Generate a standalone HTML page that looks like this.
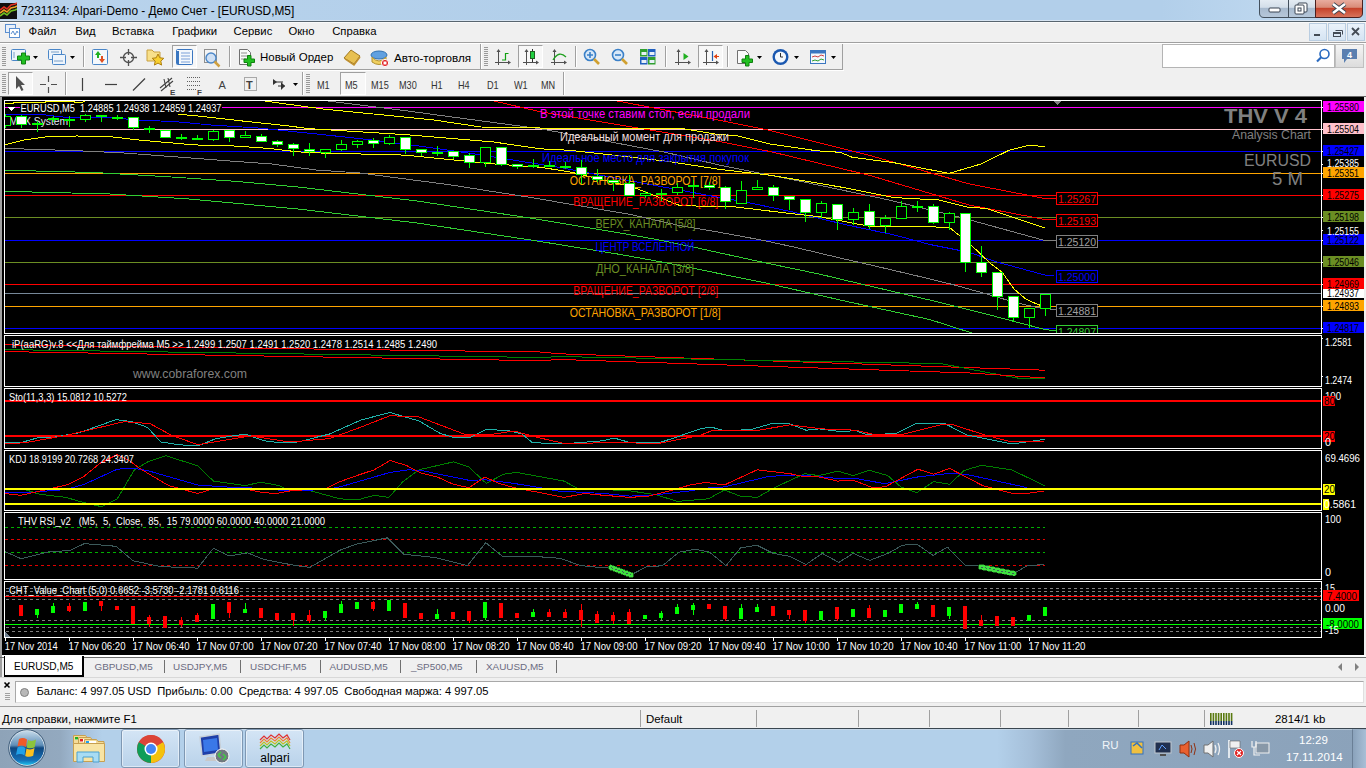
<!DOCTYPE html>
<html><head><meta charset="utf-8"><style>
*{margin:0;padding:0;box-sizing:border-box}
html,body{width:1366px;height:768px;overflow:hidden;background:#f0f0f0;font-family:"Liberation Sans",sans-serif}
.a{position:absolute}
.t{position:absolute;white-space:pre;line-height:1}
svg{position:absolute;left:0;top:0;overflow:hidden}
svg text{font-family:"Liberation Sans",sans-serif;white-space:pre}
</style></head><body>

<div class="a" style="left:0;top:0;width:1366px;height:21px;background:linear-gradient(90deg,#b9d3ec 0%,#b2cfea 40%,#b2cfea 85%,#bcd6ee 92%,#b5d1eb 100%)"></div>
<div class="a" style="left:0;top:20px;width:1366px;height:1px;background:#d6e4f2"></div>
<div class="a" style="left:0;top:21px;width:1366px;height:1px;background:#58656f"></div>
<div class="a" style="left:0;top:22px;width:1366px;height:1px;background:#fafafa"></div>
<svg style="left:0;top:2px" width="17" height="18" viewBox="0 0 17 18">
<rect x="0" y="1" width="17" height="16" fill="#101010"/>
<polyline points="0,8 4,5 7,7 11,3 15,2 17,1" fill="none" stroke="#e03020" stroke-width="1.6"/>
<polyline points="0,11 4,8 7,10 11,6 15,5 17,4" fill="none" stroke="#f0a020" stroke-width="1.6"/>
<polyline points="0,14 4,11 7,13 11,9 15,8 17,7" fill="none" stroke="#70c020" stroke-width="1.6"/>
</svg>
<div class="t" style="left:21px;top:5.5px;font-size:11.85px;color:#000">7231134: Alpari-Demo - Демо Счет - [EURUSD,M5]</div>
<svg style="left:1259px;top:0" width="105" height="19" viewBox="0 0 105 19">
<defs>
<linearGradient id="gb" x1="0" y1="0" x2="0" y2="1"><stop offset="0" stop-color="#e6edf4"/><stop offset="0.45" stop-color="#d3dee9"/><stop offset="0.5" stop-color="#a8bace"/><stop offset="1" stop-color="#b7c8da"/></linearGradient>
<linearGradient id="gr" x1="0" y1="0" x2="0" y2="1"><stop offset="0" stop-color="#eab0a4"/><stop offset="0.45" stop-color="#d98b78"/><stop offset="0.5" stop-color="#c5412a"/><stop offset="1" stop-color="#d8765e"/></linearGradient>
</defs>
<path d="M0.5,-1 V13 Q0.5,17.5 5,17.5 H29.5 V-1" fill="url(#gb)" stroke="#43505d"/>
<rect x="29.5" y="-1" width="27" height="18.5" fill="url(#gb)" stroke="#43505d"/>
<path d="M56.5,-1 V17.5 H99 Q103.5,17.5 103.5,13 V-1" fill="url(#gr)" stroke="#4a2020"/>
<rect x="10" y="8" width="11" height="4" rx="1" fill="#fff" stroke="#3a4452"/>
<rect x="39" y="3" width="9" height="9" rx="1" fill="#fff" stroke="#3a4452"/>
<rect x="36" y="5" width="9" height="9" rx="1" fill="#fff" stroke="#3a4452"/>
<rect x="39" y="8" width="3" height="3" fill="none" stroke="#3a4452"/>
<path d="M74,4 L86,13 M86,4 L74,13" stroke="#3a4452" stroke-width="4.4"/>
<path d="M74,4 L86,13 M86,4 L74,13" stroke="#fff" stroke-width="2.6"/>
</svg>
<div class="a" style="left:0;top:42px;width:1366px;height:1px;background:#a0a0a0"></div>
<div class="a" style="left:0;top:43px;width:1366px;height:1px;background:#ffffff"></div>
<svg style="left:4px;top:23px" width="17" height="16" viewBox="0 0 17 16">
<rect x="1.5" y="1.5" width="10" height="8" fill="#e8f0fa" stroke="#5b8fd0"/>
<rect x="5.5" y="5.5" width="10" height="9" fill="#fff" stroke="#5b8fd0"/>
<polyline points="7,11 9,8 11,12 13,8 14,10" fill="none" stroke="#5b8fd0"/>
</svg>
<div class="t" style="left:28.6px;top:26.3px;font-size:11.3px;color:#000">Файл</div>
<div class="t" style="left:75.2px;top:26.3px;font-size:11.3px;color:#000">Вид</div>
<div class="t" style="left:112px;top:26.3px;font-size:11.3px;color:#000">Вставка</div>
<div class="t" style="left:172.2px;top:26.3px;font-size:11.3px;color:#000">Графики</div>
<div class="t" style="left:233.6px;top:26.3px;font-size:11.3px;color:#000">Сервис</div>
<div class="t" style="left:288.4px;top:26.3px;font-size:11.3px;color:#000">Окно</div>
<div class="t" style="left:332.2px;top:26.3px;font-size:11.3px;color:#000">Справка</div>
<div class="a" style="left:1309px;top:23px;width:18px;height:18px;background:linear-gradient(#eaf2fa,#d5e4f3);border:1px solid #b9cde1"></div>
<div class="a" style="left:1328px;top:23px;width:18px;height:18px;background:linear-gradient(#eaf2fa,#d5e4f3);border:1px solid #b9cde1"></div>
<div class="a" style="left:1347px;top:23px;width:18px;height:18px;background:linear-gradient(#eaf2fa,#d5e4f3);border:1px solid #b9cde1"></div>
<svg style="left:1309px;top:23px" width="56" height="18" viewBox="0 0 56 18">
<rect x="5" y="11" width="6" height="2" fill="#444c56"/>
<rect x="24.5" y="9.5" width="7" height="4" fill="none" stroke="#444c56"/>
<path d="M26.5,7.5 H33.5 V11.5" fill="none" stroke="#444c56"/>
<rect x="24.5" y="9.5" width="7" height="1.5" fill="#444c56"/>
<path d="M43,5 L50,12 M50,5 L43,12" stroke="#444c56" stroke-width="1.8"/>
</svg>
<div class="a" style="left:0;top:69px;width:843px;height:1px;background:#a0a0a0"></div>
<div class="a" style="left:0;top:70px;width:844px;height:1px;background:#ffffff"></div>
<div class="a" style="left:0;top:96px;width:1366px;height:1px;background:#696969"></div>
<div class="a" style="left:2px;top:47px;width:4px;height:1px;background:#9a9a9a"></div><div class="a" style="left:2px;top:49px;width:4px;height:1px;background:#9a9a9a"></div><div class="a" style="left:2px;top:51px;width:4px;height:1px;background:#9a9a9a"></div><div class="a" style="left:2px;top:53px;width:4px;height:1px;background:#9a9a9a"></div><div class="a" style="left:2px;top:55px;width:4px;height:1px;background:#9a9a9a"></div><div class="a" style="left:2px;top:57px;width:4px;height:1px;background:#9a9a9a"></div><div class="a" style="left:2px;top:59px;width:4px;height:1px;background:#9a9a9a"></div><div class="a" style="left:2px;top:61px;width:4px;height:1px;background:#9a9a9a"></div><div class="a" style="left:2px;top:63px;width:4px;height:1px;background:#9a9a9a"></div><div class="a" style="left:2px;top:65px;width:4px;height:1px;background:#9a9a9a"></div>
<div class="a" style="left:2px;top:74px;width:4px;height:1px;background:#9a9a9a"></div><div class="a" style="left:2px;top:76px;width:4px;height:1px;background:#9a9a9a"></div><div class="a" style="left:2px;top:78px;width:4px;height:1px;background:#9a9a9a"></div><div class="a" style="left:2px;top:80px;width:4px;height:1px;background:#9a9a9a"></div><div class="a" style="left:2px;top:82px;width:4px;height:1px;background:#9a9a9a"></div><div class="a" style="left:2px;top:84px;width:4px;height:1px;background:#9a9a9a"></div><div class="a" style="left:2px;top:86px;width:4px;height:1px;background:#9a9a9a"></div><div class="a" style="left:2px;top:88px;width:4px;height:1px;background:#9a9a9a"></div><div class="a" style="left:2px;top:90px;width:4px;height:1px;background:#9a9a9a"></div><div class="a" style="left:2px;top:92px;width:4px;height:1px;background:#9a9a9a"></div>
<div class="a" style="left:484px;top:47px;width:4px;height:1px;background:#9a9a9a"></div><div class="a" style="left:484px;top:49px;width:4px;height:1px;background:#9a9a9a"></div><div class="a" style="left:484px;top:51px;width:4px;height:1px;background:#9a9a9a"></div><div class="a" style="left:484px;top:53px;width:4px;height:1px;background:#9a9a9a"></div><div class="a" style="left:484px;top:55px;width:4px;height:1px;background:#9a9a9a"></div><div class="a" style="left:484px;top:57px;width:4px;height:1px;background:#9a9a9a"></div><div class="a" style="left:484px;top:59px;width:4px;height:1px;background:#9a9a9a"></div><div class="a" style="left:484px;top:61px;width:4px;height:1px;background:#9a9a9a"></div><div class="a" style="left:484px;top:63px;width:4px;height:1px;background:#9a9a9a"></div><div class="a" style="left:484px;top:65px;width:4px;height:1px;background:#9a9a9a"></div>
<div class="a" style="left:306px;top:74px;width:4px;height:1px;background:#9a9a9a"></div><div class="a" style="left:306px;top:76px;width:4px;height:1px;background:#9a9a9a"></div><div class="a" style="left:306px;top:78px;width:4px;height:1px;background:#9a9a9a"></div><div class="a" style="left:306px;top:80px;width:4px;height:1px;background:#9a9a9a"></div><div class="a" style="left:306px;top:82px;width:4px;height:1px;background:#9a9a9a"></div><div class="a" style="left:306px;top:84px;width:4px;height:1px;background:#9a9a9a"></div><div class="a" style="left:306px;top:86px;width:4px;height:1px;background:#9a9a9a"></div><div class="a" style="left:306px;top:88px;width:4px;height:1px;background:#9a9a9a"></div><div class="a" style="left:306px;top:90px;width:4px;height:1px;background:#9a9a9a"></div><div class="a" style="left:306px;top:92px;width:4px;height:1px;background:#9a9a9a"></div>
<div class="a" style="left:83px;top:46px;width:1px;height:21px;background:#a0a0a0"></div><div class="a" style="left:84px;top:46px;width:1px;height:21px;background:#fff"></div>
<div class="a" style="left:229px;top:46px;width:1px;height:21px;background:#a0a0a0"></div><div class="a" style="left:230px;top:46px;width:1px;height:21px;background:#fff"></div>
<div class="a" style="left:575px;top:46px;width:1px;height:21px;background:#a0a0a0"></div><div class="a" style="left:576px;top:46px;width:1px;height:21px;background:#fff"></div>
<div class="a" style="left:665px;top:46px;width:1px;height:21px;background:#a0a0a0"></div><div class="a" style="left:666px;top:46px;width:1px;height:21px;background:#fff"></div>
<div class="a" style="left:727px;top:46px;width:1px;height:21px;background:#a0a0a0"></div><div class="a" style="left:728px;top:46px;width:1px;height:21px;background:#fff"></div>
<div class="a" style="left:65px;top:72px;width:1px;height:23px;background:#a0a0a0"></div><div class="a" style="left:66px;top:72px;width:1px;height:23px;background:#fff"></div>
<div class="a" style="left:302px;top:72px;width:1px;height:23px;background:#a0a0a0"></div><div class="a" style="left:303px;top:72px;width:1px;height:23px;background:#fff"></div>
<div class="a" style="left:563px;top:72px;width:1px;height:23px;background:#a0a0a0"></div><div class="a" style="left:564px;top:72px;width:1px;height:23px;background:#fff"></div>
<div class="a" style="left:480px;top:44px;width:1px;height:25px;background:#a0a0a0"></div><div class="a" style="left:481px;top:44px;width:1px;height:25px;background:#fff"></div>
<div class="a" style="left:842px;top:44px;width:1px;height:25px;background:#a0a0a0"></div>
<div class="a" style="left:172px;top:45px;width:25px;height:23px;background-color:#f7f7f7;background-image:radial-gradient(#e2e2e2 0.6px,transparent 0.7px);background-size:2px 2px;border-top:1px solid #a0a0a0;border-left:1px solid #a0a0a0;border-bottom:1px solid #fff;border-right:1px solid #fff"></div>
<div class="a" style="left:8px;top:72px;width:25px;height:23px;background-color:#f7f7f7;background-image:radial-gradient(#e2e2e2 0.6px,transparent 0.7px);background-size:2px 2px;border-top:1px solid #a0a0a0;border-left:1px solid #a0a0a0;border-bottom:1px solid #fff;border-right:1px solid #fff"></div>
<div class="a" style="left:340px;top:72px;width:26px;height:23px;background-color:#f7f7f7;background-image:radial-gradient(#e2e2e2 0.6px,transparent 0.7px);background-size:2px 2px;border-top:1px solid #a0a0a0;border-left:1px solid #a0a0a0;border-bottom:1px solid #fff;border-right:1px solid #fff"></div>
<div class="a" style="left:518px;top:45px;width:25px;height:23px;background-color:#f7f7f7;background-image:radial-gradient(#e2e2e2 0.6px,transparent 0.7px);background-size:2px 2px;border-top:1px solid #a0a0a0;border-left:1px solid #a0a0a0;border-bottom:1px solid #fff;border-right:1px solid #fff"></div>
<div class="a" style="left:698px;top:45px;width:25px;height:23px;background-color:#f7f7f7;background-image:radial-gradient(#e2e2e2 0.6px,transparent 0.7px);background-size:2px 2px;border-top:1px solid #a0a0a0;border-left:1px solid #a0a0a0;border-bottom:1px solid #fff;border-right:1px solid #fff"></div>
<svg style="left:0;top:43px" width="480" height="26" viewBox="0 43 480 26">
<!-- new chart -->
<rect x="11.5" y="49.5" width="14" height="11" rx="1" fill="#eef4fb" stroke="#4a86c8"/>
<path d="M14,52 V58" stroke="#7aa0c8"/>
<path d="M17.5,53 h4 v-3 h4 v3 h4 v4 h-4 v4 h-4 v-4 h-4 z" transform="translate(0,3)" fill="#22c022" stroke="#108010"/>
<!-- profiles -->
<rect x="48.5" y="49.5" width="13" height="10" rx="1" fill="#eef4fb" stroke="#4a86c8"/>
<rect x="52.5" y="54.5" width="13" height="10" rx="1" fill="#eef4fb" stroke="#4a86c8"/>
<path d="M51,52 h8 M54,61 h9" stroke="#7aa0c8"/>
<!-- market watch -->
<rect x="92.5" y="49.5" width="15" height="15" rx="1" fill="#f4f8fc" stroke="#4a86c8"/>
<path d="M98,51 l-3,4 h2 v3 h2 v-3 h2 z" fill="#20b020"/>
<path d="M102,63 l3,-4 h-2 v-3 h-2 v3 h-2 z" fill="#e05020"/>
<!-- crosshair -->
<circle cx="128.5" cy="57.5" r="5" fill="none" stroke="#505050" stroke-width="1.3"/>
<path d="M128.5,49 V55 M128.5,60 V66 M120,57.5 H126 M131,57.5 H137" stroke="#505050" stroke-width="1.3"/>
<!-- folder star -->
<path d="M147,50 h5 l2,2 h6 v9 h-13 z" fill="#f8e08a" stroke="#c8a040"/>
<path d="M158,54 l1.8,3.8 4,0.5 -3,2.8 0.8,4 -3.6,-2 -3.6,2 0.8,-4 -3,-2.8 4,-0.5 z" fill="#f8d030" stroke="#b08010"/>
<!-- terminal -->
<rect x="176.5" y="49.5" width="16" height="15" rx="1" fill="#f4f8fc" stroke="#3a76c0"/>
<rect x="177" y="51" width="2" height="13" fill="#3a76c0"/>
<path d="M181,53 h9 M181,56 h9 M181,59 h9 M181,62 h9" stroke="#7aa0d8"/>
<!-- tester -->
<rect x="204.5" y="49.5" width="12" height="13" fill="#f4f4f4" stroke="#909090"/>
<circle cx="211" cy="58" r="5" fill="#cfe0f4" stroke="#4a86c8" stroke-width="1.4"/>
<path d="M214.5,61.5 l5,5" stroke="#d0a040" stroke-width="2.5"/>
<!-- new order -->
<path d="M239.5,49.5 h8 l3,3 v12 h-11 z" fill="#fafafa" stroke="#707070"/>
<path d="M241,53 h6 M241,56 h7 M241,59 h5" stroke="#909090"/>
<path d="M244,59 h3.5 v-3.5 h3.5 v3.5 h3.5 v3.5 h-3.5 v3.5 h-3.5 v-3.5 h-3.5 z" fill="#22c022" stroke="#108010"/>
<!-- gold -->
<path d="M344,58 l7,-8 l9,6 l-6,8 z" fill="#e8c050" stroke="#a07820"/>
<path d="M345,59 l9,6 l6,-8" fill="none" stroke="#c09030" stroke-width="1.5"/>
<!-- autotrading -->
<ellipse cx="379" cy="55" rx="8" ry="4" fill="#60a0e0" stroke="#3070b0"/>
<path d="M372,57 q7,8 14,0 v5 q-7,5 -14,0 z" fill="#f0d060" stroke="#b09030"/>
<circle cx="385" cy="63" r="3.6" fill="#e02020" stroke="#fff"/>
<rect x="383.5" y="61.5" width="3" height="3" fill="#fff"/>
</svg>
<svg style="left:33px;top:56px" width="6" height="4" viewBox="0 0 6 4"><path d="M0,0 H5 L2.5,3 Z" fill="#000"/></svg>
<svg style="left:70px;top:56px" width="6" height="4" viewBox="0 0 6 4"><path d="M0,0 H5 L2.5,3 Z" fill="#000"/></svg>
<div class="t" style="left:260px;top:51.7px;font-size:11.5px;color:#000">Новый Ордер</div>
<div class="t" style="left:394px;top:51.7px;font-size:11.7px;color:#000">Авто-торговля</div>
<svg style="left:486px;top:43px" width="356" height="26" viewBox="486 43 356 26">
<g stroke="#505050" fill="none">
<path d="M498.5,51 V65 M495,62.5 H510"/>
<path d="M526.5,51 V65 M523,62.5 H538"/>
<path d="M554.5,51 V65 M551,62.5 H566"/>
<path d="M678.5,51 V65 M675,62.5 H690"/>
<path d="M706.5,51 V65 M703,62.5 H718"/>
</g>
<g fill="#505050">
<path d="M496.5,52 h4 l-2,-3 z"/><path d="M508,60.5 v4 l3,-2 z"/>
<path d="M524.5,52 h4 l-2,-3 z"/><path d="M536,60.5 v4 l3,-2 z"/>
<path d="M552.5,52 h4 l-2,-3 z"/><path d="M564,60.5 v4 l3,-2 z"/>
<path d="M676.5,52 h4 l-2,-3 z"/><path d="M688,60.5 v4 l3,-2 z"/>
<path d="M704.5,52 h4 l-2,-3 z"/><path d="M716,60.5 v4 l3,-2 z"/>
</g>
<path d="M505.5,53 V60.5 M505,53.5 h3.5 M502,60 h3.5" stroke="#10a010" stroke-width="1.2" fill="none"/>
<path d="M532.5,49 V62" stroke="#303030"/>
<rect x="530.5" y="51.5" width="4" height="7" fill="#20d040" stroke="#206020"/>
<path d="M553,60 Q559,50 566,57" fill="none" stroke="#20a020" stroke-width="1.3"/>
<circle cx="590" cy="55" r="5.5" fill="#d8e8f8" stroke="#3a80c8" stroke-width="1.6"/>
<path d="M587,55 h6 M590,52 v6" stroke="#3a80c8" stroke-width="1.6"/>
<path d="M594,59 l5,5" stroke="#d0a030" stroke-width="2.6"/>
<circle cx="618" cy="55" r="5.5" fill="#d8e8f8" stroke="#3a80c8" stroke-width="1.6"/>
<path d="M615,55 h6" stroke="#3a80c8" stroke-width="1.6"/>
<path d="M622,59 l5,5" stroke="#d0a030" stroke-width="2.6"/>
<rect x="640" y="49" width="7.5" height="7.5" fill="#30a030"/><rect x="648" y="49" width="7.5" height="7.5" fill="#2060c0"/>
<rect x="640" y="57" width="7.5" height="7.5" fill="#2060c0"/><rect x="648" y="57" width="7.5" height="7.5" fill="#30a030"/>
<rect x="641.5" y="52" width="5" height="3" fill="#e8f0f8"/><rect x="649.5" y="52" width="5" height="3" fill="#e8f0f8"/>
<rect x="641.5" y="60" width="5" height="3" fill="#e8f0f8"/><rect x="649.5" y="60" width="5" height="3" fill="#e8f0f8"/>
<path d="M683.5,53 l5,3.5 l-5,3.5 z" fill="#20b020"/>
<path d="M712.5,51 V61" stroke="#2060b0" stroke-width="1.2"/><path d="M713.5,56.5 l3.5,-2.5 v5 z" fill="#e04010"/><path d="M716,56.5 h3" stroke="#e04010"/>
<path d="M737.5,50.5 h8 l3,3 v10 h-11 z" fill="#fafafa" stroke="#707070"/>
<path d="M742,59 h3.5 v-3.5 h3.5 v3.5 h3.5 v3.5 h-3.5 v3.5 h-3.5 v-3.5 h-3.5 z" fill="#22c022" stroke="#108010"/>
<circle cx="780.5" cy="57" r="8" fill="#1a58b0"/>
<circle cx="780.5" cy="57" r="5.6" fill="#f4f8fc"/>
<path d="M780.5,53 V57 H783" stroke="#303030" fill="none"/>
<rect x="810.5" y="50.5" width="15" height="13" fill="#f4f8fc" stroke="#3a76c0"/>
<rect x="811" y="51" width="14" height="2.5" fill="#3a76c0"/>
<path d="M812,57 l3,-1 3,1 3,-2 3,1" stroke="#d04040" fill="none"/>
<path d="M812,61 l3,-1 3,1 3,-2 3,1" stroke="#30a030" fill="none"/>
</svg>
<svg style="left:757px;top:56px" width="6" height="4" viewBox="0 0 6 4"><path d="M0,0 H5 L2.5,3 Z" fill="#000"/></svg>
<svg style="left:794px;top:56px" width="6" height="4" viewBox="0 0 6 4"><path d="M0,0 H5 L2.5,3 Z" fill="#000"/></svg>
<svg style="left:831px;top:56px" width="6" height="4" viewBox="0 0 6 4"><path d="M0,0 H5 L2.5,3 Z" fill="#000"/></svg>
<div class="a" style="left:1162px;top:44px;width:173px;height:24px;background:#fff;border:1px solid #b4b4b4"></div>
<svg style="left:1314px;top:47px" width="18" height="18" viewBox="0 0 18 18">
<circle cx="10.5" cy="7" r="4.5" fill="none" stroke="#2a6ac0" stroke-width="1.6"/>
<path d="M7.5,10 L3,14.5" stroke="#2a6ac0" stroke-width="2.2"/>
</svg>
<div class="a" style="left:1335px;top:44px;width:29px;height:24px;background:linear-gradient(#f4f4f4,#dcdcdc);border:1px solid #c0c0c0"></div>
<svg style="left:1340px;top:48px" width="20" height="18" viewBox="0 0 20 18">
<path d="M2,1 h15 v10 h-10 l-3,4 v-4 h-2 z" fill="#5a7fb0"/>
<text x="9.5" y="9.5" font-size="9" fill="#fff" text-anchor="middle" font-weight="bold">4</text>
</svg>
<svg style="left:0;top:70px" width="302" height="26" viewBox="0 70 302 26">
<path d="M16,76 V89 l3,-3 l2.5,5 l2,-1 l-2.5,-5 h4 z" fill="#505050"/>
<path d="M48.5,76 V82 M48.5,87 V93 M40,84.5 H46 M51,84.5 H57" stroke="#505050" stroke-width="1.2"/>
<path d="M82.5,78 V91" stroke="#404040" stroke-width="1.2"/>
<path d="M105,84.5 H117" stroke="#404040" stroke-width="1.2"/>
<path d="M133,90.5 L145,78.5" stroke="#404040" stroke-width="1.2"/>
<path d="M160,88 L172,78 M161,91 L173,81 M164,79 l2,9 M168,78 l2,9" stroke="#404040" stroke-width="1.1"/>
<text x="170" y="95" font-size="8" font-weight="bold" fill="#404040">E</text>
<path d="M187,77.5 h14 M187,81.5 h14 M187,85.5 h14 M187,89.5 h10" stroke="#606060" stroke-dasharray="1,1"/>
<text x="197" y="95" font-size="8" font-weight="bold" fill="#404040">F</text>
<text x="218.5" y="89" font-size="11" fill="#404040">A</text>
<rect x="244.5" y="77.5" width="12" height="13" fill="none" stroke="#606060" stroke-dasharray="1,1"/>
<text x="246" y="89" font-size="11" font-weight="bold" fill="#404040">T</text>
<path d="M273,79 l4,3 l-4,3 z M281,82 l4,4 l-4,4 z" fill="#303030"/>
<path d="M276,82 h7 M278,86 h7" stroke="#303030"/>
</svg>
<svg style="left:293px;top:83px" width="6" height="4" viewBox="0 0 6 4"><path d="M0,0 H5 L2.5,3 Z" fill="#000"/></svg>
<div class="t" style="left:317.3px;top:80.2px;font-size:10.5px;transform:scaleX(0.87);transform-origin:0 0;color:#333">M1</div>
<div class="t" style="left:345.4px;top:80.2px;font-size:10.5px;transform:scaleX(0.87);transform-origin:0 0;color:#333">M5</div>
<div class="t" style="left:371.2px;top:80.2px;font-size:10.5px;transform:scaleX(0.87);transform-origin:0 0;color:#333">M15</div>
<div class="t" style="left:399.3px;top:80.2px;font-size:10.5px;transform:scaleX(0.87);transform-origin:0 0;color:#333">M30</div>
<div class="t" style="left:430.5px;top:80.2px;font-size:10.5px;transform:scaleX(0.87);transform-origin:0 0;color:#333">H1</div>
<div class="t" style="left:457.7px;top:80.2px;font-size:10.5px;transform:scaleX(0.87);transform-origin:0 0;color:#333">H4</div>
<div class="t" style="left:486.7px;top:80.2px;font-size:10.5px;transform:scaleX(0.87);transform-origin:0 0;color:#333">D1</div>
<div class="t" style="left:514px;top:80.2px;font-size:10.5px;transform:scaleX(0.87);transform-origin:0 0;color:#333">W1</div>
<div class="t" style="left:541px;top:80.2px;font-size:10.5px;transform:scaleX(0.87);transform-origin:0 0;color:#333">MN</div>
<div class="a" style="left:0;top:97px;width:2px;height:561px;background:#a0a0a0"></div>
<div class="a" style="left:1364px;top:97px;width:2px;height:561px;background:#f0f0f0"></div>
<svg style="left:0;top:0" width="1366" height="768" viewBox="0 0 1366 768" shape-rendering="crispEdges">
<rect x="2" y="97" width="1362" height="558" fill="#000"/>
<rect x="2" y="655" width="1364" height="2" fill="#fff"/>
<rect x="0" y="657" width="1366" height="1" fill="#696969"/>
<defs>
<clipPath id="c0"><rect x="5" y="101" width="1316" height="232"/></clipPath>
<clipPath id="c1"><rect x="5" y="336" width="1316" height="50"/></clipPath>
<clipPath id="c2"><rect x="5" y="389" width="1316" height="59"/></clipPath>
<clipPath id="c3"><rect x="5" y="451" width="1316" height="59"/></clipPath>
<clipPath id="c4"><rect x="5" y="513" width="1316" height="66"/></clipPath>
<clipPath id="c5"><rect x="5" y="582" width="1316" height="55"/></clipPath>
</defs>
<g clip-path="url(#c0)"><rect x="5" y="107" width="1316" height="1" fill="#ff00ff" />
<rect x="5" y="129" width="1316" height="1" fill="#ffc0cb" />
<rect x="5" y="151" width="1316" height="1" fill="#0000ff" />
<rect x="5" y="173" width="1316" height="1" fill="#ffa500" />
<rect x="5" y="195" width="1316" height="1" fill="#ff0000" />
<rect x="5" y="217" width="1316" height="1" fill="#6b8e23" />
<rect x="5" y="240" width="1316" height="1" fill="#0000ff" />
<rect x="5" y="262" width="1316" height="1" fill="#6b8e23" />
<rect x="5" y="284" width="1316" height="1" fill="#ff0000" />
<rect x="5" y="293" width="1316" height="1" fill="#778899" />
<rect x="5" y="306" width="1316" height="1" fill="#ffa500" />
<rect x="5" y="328" width="1316" height="1" fill="#0000ff" />
<polyline points="5,148.4 77,150.7 124,153 187,157.7 234,161.3 272,164 316,170 360,173 417,180.5 448,184.5 534,198 630,214.4 680,225.6 720,232.4 763,240.3 795,247.3 840,258 872,265.3 920,276.6 953,284.6 985,293.5 1017,303 1040,308 1056,309.6" fill="none" stroke="#808080" stroke-width="1" shape-rendering="optimizeSpeed"/>
<polyline points="320,100 400,110 540,128.7 664,152 720,165.2 795,180.1 889,200 958,216.7 1044,240.3 1056,240.3" fill="none" stroke="#808080" stroke-width="1" shape-rendering="optimizeSpeed"/>
<polyline points="5,170.2 94,172.5 164,176.5 234,181.2 300,187.2 417,201 534,218.6 620,233 654,239 693,247 766,263 820,274.2 847,280.7 930,300.1 986,314 1044,329.3 1056,331" fill="none" stroke="#32cd32" stroke-width="1" shape-rendering="optimizeSpeed"/>
<polyline points="5,191.3 110,194 187,198.8 300,209.2 417,223 534,240.5 620,254.4 668,263.2 766,283 820,295.4 847,301.5 930,319.6 975,334" fill="none" stroke="#32cd32" stroke-width="1" shape-rendering="optimizeSpeed"/>
<polyline points="612,100 720,120.4 770,130.4 869,155.2 969,183.9 1045,198.5 1056,198.5" fill="none" stroke="#ff0000" stroke-width="1" shape-rendering="optimizeSpeed"/>
<polyline points="494,101 540,111.7 720,141.6 770,151.5 869,175.2 969,205 1045,219.5 1056,219.5" fill="none" stroke="#ff0000" stroke-width="1" shape-rendering="optimizeSpeed"/>
<polyline points="5,114.9 46,115 70,117.9 111,117.7 141,120.3 174,121.5 211,125 258,128 320,134.3 370,139.8 419,146 477,154.3 560,167.5 587,172.7 720,197.6 748,202.5 795,212.5 847,225 894,234.9 930,244.5 969,252.3 995,261.5 1045,275.1 1056,275" fill="none" stroke="#0000ff" stroke-width="1" shape-rendering="optimizeSpeed"/>
<polyline points="5,103.5 13,103.5 13,102.5 45,102.5 45,101.5 74,101.5 74,102.5 82,102.5 90,98 250,98 263,100.8 323,109 434,120 481,127 540,128 570,129 626,128.4 685,129 720,134.8 735,135.3 770,144 817,150.8 840,152.3 852,157.2 894,162.7 949,173.4 981,164 1009,150.3 1029,145.3 1045,146.5" fill="none" stroke="#ffff00" stroke-width="1" shape-rendering="optimizeSpeed"/>
<polyline points="178,114.2 200,116.2 246,121.4 288,125.8 307,128.5 405,134.6 493,141.9 540,148.8 570,150.3 602,153.9 665,161 720,169.4 770,175.2 844,187.6 894,197.6 939,200 969,207.5 986,208.3 1045,228" fill="none" stroke="#ffff00" stroke-width="1" shape-rendering="optimizeSpeed"/>
<polyline points="5,144.9 23,140.2 47,136.7 77,136 110,136.7 141,140.2 194,144.9 234,146 270,148.5 297,151.8 320,153 405,155.1 493,163.9 540,167.2 570,171.9 634,187.5 680,205.6 736,207 782,212.5 819,216.7 869,226.2 925,226.4 950,227.8 972,245.9 991,264 1002,272 1014,289 1025,298.4 1034,302.8 1042,306" fill="none" stroke="#ffff00" stroke-width="1" shape-rendering="optimizeSpeed"/>
<rect x="1056.5" y="192.5" width="41" height="12" fill="#000" stroke="#ff0000"/>
<text x="1058" y="202.5" fill="#ff0000" font-size="11" font-weight="normal" text-anchor="start" textLength="38" lengthAdjust="spacingAndGlyphs" shape-rendering="optimizeSpeed">1.25267</text>
<rect x="1056.5" y="214.5" width="41" height="12" fill="#000" stroke="#ff0000"/>
<text x="1058" y="224.5" fill="#ff0000" font-size="11" font-weight="normal" text-anchor="start" textLength="38" lengthAdjust="spacingAndGlyphs" shape-rendering="optimizeSpeed">1.25193</text>
<rect x="1056.5" y="235.5" width="41" height="12" fill="#000" stroke="#808080"/>
<text x="1058" y="245.5" fill="#a0a0a0" font-size="11" font-weight="normal" text-anchor="start" textLength="38" lengthAdjust="spacingAndGlyphs" shape-rendering="optimizeSpeed">1.25120</text>
<rect x="1056.5" y="270.5" width="41" height="12" fill="#000" stroke="#0000ff"/>
<text x="1058" y="280.5" fill="#0000ff" font-size="11" font-weight="normal" text-anchor="start" textLength="38" lengthAdjust="spacingAndGlyphs" shape-rendering="optimizeSpeed">1.25000</text>
<rect x="1056.5" y="304.5" width="41" height="12" fill="#000" stroke="#808080"/>
<text x="1058" y="314.5" fill="#a0a0a0" font-size="11" font-weight="normal" text-anchor="start" textLength="38" lengthAdjust="spacingAndGlyphs" shape-rendering="optimizeSpeed">1.24881</text>
<rect x="1056.5" y="325.5" width="41" height="12" fill="#000" stroke="#32cd32"/>
<text x="1058" y="335.5" fill="#32cd32" font-size="11" font-weight="normal" text-anchor="start" textLength="38" lengthAdjust="spacingAndGlyphs" shape-rendering="optimizeSpeed">1.24807</text>
<text x="540" y="118" fill="#ff00ff" font-size="12" font-weight="normal" text-anchor="start" textLength="210" lengthAdjust="spacingAndGlyphs" shape-rendering="optimizeSpeed">В этой точке ставим стоп, если продали</text>
<text x="560" y="140.5" fill="#f0dede" font-size="12" font-weight="normal" text-anchor="start" textLength="169" lengthAdjust="spacingAndGlyphs" shape-rendering="optimizeSpeed">Идеальный момент для продажи</text>
<text x="542" y="162" fill="#0000ff" font-size="12" font-weight="normal" text-anchor="start" textLength="207" lengthAdjust="spacingAndGlyphs" shape-rendering="optimizeSpeed">Идеальное место для закрытия покупок</text>
<text x="569.7" y="184.5" fill="#ffa500" font-size="12" font-weight="normal" text-anchor="start" textLength="151" lengthAdjust="spacingAndGlyphs" shape-rendering="optimizeSpeed">ОСТАНОВКА_РАЗВОРОТ [7/8]</text>
<text x="573.2" y="206" fill="#ff0000" font-size="12" font-weight="normal" text-anchor="start" textLength="145" lengthAdjust="spacingAndGlyphs" shape-rendering="optimizeSpeed">ВРАЩЕНИЕ_РАЗВОРОТ [6/8]</text>
<text x="595.5" y="228" fill="#6b8e23" font-size="12" font-weight="normal" text-anchor="start" textLength="100" lengthAdjust="spacingAndGlyphs" shape-rendering="optimizeSpeed">ВЕРХ_КАНАЛА [5/8]</text>
<text x="595.5" y="250.5" fill="#0000ff" font-size="12" font-weight="normal" text-anchor="start" textLength="99" lengthAdjust="spacingAndGlyphs" shape-rendering="optimizeSpeed">ЦЕНТР ВСЕЛЕННОЙ</text>
<text x="596" y="273" fill="#6b8e23" font-size="12" font-weight="normal" text-anchor="start" textLength="98" lengthAdjust="spacingAndGlyphs" shape-rendering="optimizeSpeed">ДНО_КАНАЛА [3/8]</text>
<text x="573.2" y="294.5" fill="#ff0000" font-size="12" font-weight="normal" text-anchor="start" textLength="145" lengthAdjust="spacingAndGlyphs" shape-rendering="optimizeSpeed">ВРАЩЕНИЕ_РАЗВОРОТ [2/8]</text>
<text x="569.7" y="317" fill="#ffa500" font-size="12" font-weight="normal" text-anchor="start" textLength="151" lengthAdjust="spacingAndGlyphs" shape-rendering="optimizeSpeed">ОСТАНОВКА_РАЗВОРОТ [1/8]</text>
<text x="9.2" y="124.5" fill="#e0e8f0" font-size="11.5" font-weight="normal" text-anchor="start" textLength="59" lengthAdjust="spacingAndGlyphs" shape-rendering="optimizeSpeed">MFX System</text>
<rect x="5" y="114" width="1" height="14" fill="#00ff00"/>
<rect x="0" y="116" width="11" height="10" fill="#00ff00"/>
<rect x="1" y="117" width="9" height="8" fill="#000000"/>
<rect x="21" y="115" width="1" height="13" fill="#00ff00"/>
<rect x="16" y="116" width="11" height="9" fill="#00ff00"/>
<rect x="17" y="117" width="9" height="7" fill="#ffffff"/>
<rect x="37" y="121" width="1" height="11" fill="#00ff00"/>
<rect x="32" y="123" width="11" height="2" fill="#00ff00"/>
<rect x="53" y="116" width="1" height="6" fill="#00ff00"/>
<rect x="48" y="118" width="11" height="2" fill="#00ff00"/>
<rect x="69" y="116" width="1" height="11" fill="#00ff00"/>
<rect x="64" y="119" width="11" height="2" fill="#00ff00"/>
<rect x="85" y="114" width="1" height="8" fill="#00ff00"/>
<rect x="80" y="115" width="11" height="5" fill="#00ff00"/>
<rect x="81" y="116" width="9" height="3" fill="#000000"/>
<rect x="101" y="115" width="1" height="7" fill="#00ff00"/>
<rect x="96" y="115" width="11" height="2" fill="#00ff00"/>
<rect x="117" y="115" width="1" height="5" fill="#00ff00"/>
<rect x="112" y="117" width="11" height="2" fill="#00ff00"/>
<rect x="133" y="117" width="1" height="13" fill="#00ff00"/>
<rect x="128" y="117" width="11" height="11" fill="#00ff00"/>
<rect x="129" y="118" width="9" height="9" fill="#ffffff"/>
<rect x="149" y="126" width="1" height="7" fill="#00ff00"/>
<rect x="144" y="128" width="11" height="2" fill="#00ff00"/>
<rect x="165" y="130" width="1" height="8" fill="#00ff00"/>
<rect x="160" y="130" width="11" height="8" fill="#00ff00"/>
<rect x="161" y="131" width="9" height="6" fill="#ffffff"/>
<rect x="181" y="134" width="1" height="6" fill="#00ff00"/>
<rect x="176" y="137" width="11" height="2" fill="#00ff00"/>
<rect x="197" y="135" width="1" height="5" fill="#00ff00"/>
<rect x="192" y="138" width="11" height="2" fill="#00ff00"/>
<rect x="213" y="130" width="1" height="11" fill="#00ff00"/>
<rect x="208" y="131" width="11" height="9" fill="#00ff00"/>
<rect x="209" y="132" width="9" height="7" fill="#000000"/>
<rect x="229" y="130" width="1" height="12" fill="#00ff00"/>
<rect x="224" y="130" width="11" height="8" fill="#00ff00"/>
<rect x="225" y="131" width="9" height="6" fill="#ffffff"/>
<rect x="245" y="131" width="1" height="7" fill="#00ff00"/>
<rect x="240" y="135" width="11" height="3" fill="#00ff00"/>
<rect x="241" y="136" width="9" height="1" fill="#000000"/>
<rect x="261" y="134" width="1" height="8" fill="#00ff00"/>
<rect x="256" y="136" width="11" height="6" fill="#00ff00"/>
<rect x="257" y="137" width="9" height="4" fill="#ffffff"/>
<rect x="277" y="140" width="1" height="7" fill="#00ff00"/>
<rect x="272" y="141" width="11" height="4" fill="#00ff00"/>
<rect x="273" y="142" width="9" height="2" fill="#ffffff"/>
<rect x="293" y="143" width="1" height="13" fill="#00ff00"/>
<rect x="288" y="144" width="11" height="5" fill="#00ff00"/>
<rect x="289" y="145" width="9" height="3" fill="#ffffff"/>
<rect x="309" y="143" width="1" height="13" fill="#00ff00"/>
<rect x="304" y="149" width="11" height="3" fill="#00ff00"/>
<rect x="305" y="150" width="9" height="1" fill="#ffffff"/>
<rect x="325" y="149" width="1" height="9" fill="#00ff00"/>
<rect x="320" y="149" width="11" height="4" fill="#00ff00"/>
<rect x="321" y="150" width="9" height="2" fill="#000000"/>
<rect x="341" y="140" width="1" height="11" fill="#00ff00"/>
<rect x="336" y="144" width="11" height="6" fill="#00ff00"/>
<rect x="337" y="145" width="9" height="4" fill="#000000"/>
<rect x="357" y="140" width="1" height="8" fill="#00ff00"/>
<rect x="352" y="141" width="11" height="4" fill="#00ff00"/>
<rect x="353" y="142" width="9" height="2" fill="#000000"/>
<rect x="373" y="138" width="1" height="10" fill="#00ff00"/>
<rect x="368" y="140" width="11" height="4" fill="#00ff00"/>
<rect x="369" y="141" width="9" height="2" fill="#ffffff"/>
<rect x="389" y="135" width="1" height="10" fill="#00ff00"/>
<rect x="384" y="137" width="11" height="7" fill="#00ff00"/>
<rect x="385" y="138" width="9" height="5" fill="#000000"/>
<rect x="405" y="137" width="1" height="17" fill="#00ff00"/>
<rect x="400" y="137" width="11" height="13" fill="#00ff00"/>
<rect x="401" y="138" width="9" height="11" fill="#ffffff"/>
<rect x="421" y="149" width="1" height="7" fill="#00ff00"/>
<rect x="416" y="149" width="11" height="4" fill="#00ff00"/>
<rect x="417" y="150" width="9" height="2" fill="#ffffff"/>
<rect x="437" y="146" width="1" height="10" fill="#00ff00"/>
<rect x="432" y="152" width="11" height="2" fill="#00ff00"/>
<rect x="453" y="151" width="1" height="8" fill="#00ff00"/>
<rect x="448" y="151" width="11" height="6" fill="#00ff00"/>
<rect x="449" y="152" width="9" height="4" fill="#ffffff"/>
<rect x="469" y="153" width="1" height="15" fill="#00ff00"/>
<rect x="464" y="155" width="11" height="8" fill="#00ff00"/>
<rect x="465" y="156" width="9" height="6" fill="#ffffff"/>
<rect x="485" y="147" width="1" height="20" fill="#00ff00"/>
<rect x="480" y="147" width="11" height="16" fill="#00ff00"/>
<rect x="481" y="148" width="9" height="14" fill="#000000"/>
<rect x="501" y="147" width="1" height="19" fill="#00ff00"/>
<rect x="496" y="147" width="11" height="18" fill="#00ff00"/>
<rect x="497" y="148" width="9" height="16" fill="#ffffff"/>
<rect x="517" y="164" width="1" height="5" fill="#00ff00"/>
<rect x="512" y="164" width="11" height="3" fill="#00ff00"/>
<rect x="513" y="165" width="9" height="1" fill="#ffffff"/>
<rect x="533" y="159" width="1" height="9" fill="#00ff00"/>
<rect x="528" y="165" width="11" height="2" fill="#00ff00"/>
<rect x="549" y="161" width="1" height="6" fill="#00ff00"/>
<rect x="544" y="165" width="11" height="2" fill="#00ff00"/>
<rect x="565" y="162" width="1" height="7" fill="#00ff00"/>
<rect x="560" y="166" width="11" height="2" fill="#00ff00"/>
<rect x="581" y="160" width="1" height="24" fill="#00ff00"/>
<rect x="576" y="167" width="11" height="8" fill="#00ff00"/>
<rect x="577" y="168" width="9" height="6" fill="#ffffff"/>
<rect x="597" y="169" width="1" height="13" fill="#00ff00"/>
<rect x="592" y="176" width="11" height="4" fill="#00ff00"/>
<rect x="593" y="177" width="9" height="2" fill="#ffffff"/>
<rect x="613" y="180" width="1" height="11" fill="#00ff00"/>
<rect x="608" y="180" width="11" height="3" fill="#00ff00"/>
<rect x="609" y="181" width="9" height="1" fill="#ffffff"/>
<rect x="629" y="175" width="1" height="21" fill="#00ff00"/>
<rect x="624" y="183" width="11" height="13" fill="#00ff00"/>
<rect x="625" y="184" width="9" height="11" fill="#ffffff"/>
<rect x="645" y="191" width="1" height="7" fill="#00ff00"/>
<rect x="640" y="193" width="11" height="3" fill="#00ff00"/>
<rect x="641" y="194" width="9" height="1" fill="#000000"/>
<rect x="661" y="189" width="1" height="12" fill="#00ff00"/>
<rect x="656" y="193" width="11" height="2" fill="#00ff00"/>
<rect x="677" y="183" width="1" height="12" fill="#00ff00"/>
<rect x="672" y="187" width="11" height="6" fill="#00ff00"/>
<rect x="673" y="188" width="9" height="4" fill="#000000"/>
<rect x="693" y="180" width="1" height="18" fill="#00ff00"/>
<rect x="688" y="185" width="11" height="2" fill="#00ff00"/>
<rect x="709" y="182" width="1" height="8" fill="#00ff00"/>
<rect x="704" y="185" width="11" height="3" fill="#00ff00"/>
<rect x="705" y="186" width="9" height="1" fill="#ffffff"/>
<rect x="725" y="186" width="1" height="23" fill="#00ff00"/>
<rect x="720" y="187" width="11" height="15" fill="#00ff00"/>
<rect x="721" y="188" width="9" height="13" fill="#ffffff"/>
<rect x="741" y="181" width="1" height="23" fill="#00ff00"/>
<rect x="736" y="190" width="11" height="14" fill="#00ff00"/>
<rect x="737" y="191" width="9" height="12" fill="#000000"/>
<rect x="757" y="180" width="1" height="10" fill="#00ff00"/>
<rect x="752" y="187" width="11" height="3" fill="#00ff00"/>
<rect x="753" y="188" width="9" height="1" fill="#000000"/>
<rect x="773" y="185" width="1" height="16" fill="#00ff00"/>
<rect x="768" y="187" width="11" height="9" fill="#00ff00"/>
<rect x="769" y="188" width="9" height="7" fill="#ffffff"/>
<rect x="789" y="196" width="1" height="14" fill="#00ff00"/>
<rect x="784" y="196" width="11" height="4" fill="#00ff00"/>
<rect x="785" y="197" width="9" height="2" fill="#ffffff"/>
<rect x="805" y="199" width="1" height="23" fill="#00ff00"/>
<rect x="800" y="199" width="11" height="14" fill="#00ff00"/>
<rect x="801" y="200" width="9" height="12" fill="#ffffff"/>
<rect x="821" y="201" width="1" height="17" fill="#00ff00"/>
<rect x="816" y="203" width="11" height="10" fill="#00ff00"/>
<rect x="817" y="204" width="9" height="8" fill="#000000"/>
<rect x="837" y="204" width="1" height="26" fill="#00ff00"/>
<rect x="832" y="204" width="11" height="16" fill="#00ff00"/>
<rect x="833" y="205" width="9" height="14" fill="#ffffff"/>
<rect x="853" y="208" width="1" height="17" fill="#00ff00"/>
<rect x="848" y="212" width="11" height="8" fill="#00ff00"/>
<rect x="849" y="213" width="9" height="6" fill="#000000"/>
<rect x="869" y="204" width="1" height="25" fill="#00ff00"/>
<rect x="864" y="211" width="11" height="15" fill="#00ff00"/>
<rect x="865" y="212" width="9" height="13" fill="#ffffff"/>
<rect x="885" y="215" width="1" height="18" fill="#00ff00"/>
<rect x="880" y="218" width="11" height="8" fill="#00ff00"/>
<rect x="881" y="219" width="9" height="6" fill="#000000"/>
<rect x="901" y="201" width="1" height="18" fill="#00ff00"/>
<rect x="896" y="206" width="11" height="13" fill="#00ff00"/>
<rect x="897" y="207" width="9" height="11" fill="#000000"/>
<rect x="917" y="201" width="1" height="11" fill="#00ff00"/>
<rect x="912" y="206" width="11" height="2" fill="#00ff00"/>
<rect x="933" y="204" width="1" height="20" fill="#00ff00"/>
<rect x="928" y="206" width="11" height="17" fill="#00ff00"/>
<rect x="929" y="207" width="9" height="15" fill="#ffffff"/>
<rect x="949" y="212" width="1" height="18" fill="#00ff00"/>
<rect x="944" y="213" width="11" height="10" fill="#00ff00"/>
<rect x="945" y="214" width="9" height="8" fill="#000000"/>
<rect x="965" y="213" width="1" height="59" fill="#00ff00"/>
<rect x="960" y="213" width="11" height="50" fill="#00ff00"/>
<rect x="961" y="214" width="9" height="48" fill="#ffffff"/>
<rect x="981" y="246" width="1" height="31" fill="#00ff00"/>
<rect x="976" y="262" width="11" height="11" fill="#00ff00"/>
<rect x="977" y="263" width="9" height="9" fill="#ffffff"/>
<rect x="997" y="272" width="1" height="38" fill="#00ff00"/>
<rect x="992" y="272" width="11" height="25" fill="#00ff00"/>
<rect x="993" y="273" width="9" height="23" fill="#ffffff"/>
<rect x="1013" y="296" width="1" height="26" fill="#00ff00"/>
<rect x="1008" y="296" width="11" height="22" fill="#00ff00"/>
<rect x="1009" y="297" width="9" height="20" fill="#ffffff"/>
<rect x="1029" y="308" width="1" height="20" fill="#00ff00"/>
<rect x="1024" y="308" width="11" height="10" fill="#00ff00"/>
<rect x="1025" y="309" width="9" height="8" fill="#000000"/>
<rect x="1045" y="294" width="1" height="22" fill="#00ff00"/>
<rect x="1040" y="294" width="11" height="15" fill="#00ff00"/>
<rect x="1041" y="295" width="9" height="13" fill="#000000"/>
<rect x="20" y="103" width="202" height="10" fill="#000"/>
<text x="20.5" y="112" fill="#ffffff" font-size="11" font-weight="normal" text-anchor="start" textLength="201" lengthAdjust="spacingAndGlyphs" shape-rendering="optimizeSpeed">EURUSD,M5  1.24885 1.24938 1.24859 1.24937</text>
<path d="M8,107 h7.5 l-3.75,4 z" fill="#fff" shape-rendering="optimizeSpeed"/>
<text x="1224" y="123" fill="#808080" font-size="20.5" font-weight="bold" text-anchor="start" textLength="83" lengthAdjust="spacingAndGlyphs" shape-rendering="optimizeSpeed">THV V 4</text>
<text x="1232" y="138.5" fill="#808080" font-size="12.5" font-weight="normal" text-anchor="start" textLength="79" lengthAdjust="spacingAndGlyphs" shape-rendering="optimizeSpeed">Analysis Chart</text>
<text x="1244" y="166" fill="#808080" font-size="16" font-weight="normal" text-anchor="start" textLength="67" lengthAdjust="spacingAndGlyphs" shape-rendering="optimizeSpeed">EURUSD</text>
<text x="1272" y="185" fill="#808080" font-size="19" font-weight="normal" text-anchor="start" textLength="31" lengthAdjust="spacingAndGlyphs" shape-rendering="optimizeSpeed">5 M</text>
<path d="M1052,100 h10 l-5,5 z" fill="#808080"/></g>
<g clip-path="url(#c1)"><polyline points="5,344.9 540,352 560,353.8 1045,370.2" fill="none" stroke="#ff0000" stroke-width="1" shape-rendering="optimizeSpeed"/>
<polyline points="5,349.6 540,357.5 560,356.6 941,363.6 990,373 1023,379 1045,378" fill="none" stroke="#008000" stroke-width="1" shape-rendering="optimizeSpeed"/>
<polyline points="5,351.6 540,360.7 560,359.5 970,373 1045,378" fill="none" stroke="#ff0000" stroke-width="1" shape-rendering="optimizeSpeed"/>
<text x="12" y="348" fill="#ffffff" font-size="11" font-weight="normal" text-anchor="start" textLength="425" lengthAdjust="spacingAndGlyphs" shape-rendering="optimizeSpeed">iP(aaRG)v.8 &lt;&lt;Для таймфрейма M5 &gt;&gt; 1.2499 1.2507 1.2491 1.2520 1.2478 1.2514 1.2485 1.2490</text>
<text x="133" y="378" fill="#808080" font-size="12.5" font-weight="normal" text-anchor="start" textLength="114" lengthAdjust="spacingAndGlyphs" shape-rendering="optimizeSpeed">www.cobraforex.com</text></g>
<g clip-path="url(#c2)"><rect x="5" y="400" width="1316" height="2" fill="#ff0000" />
<rect x="5" y="435" width="1316" height="2" fill="#ff0000" />
<polyline points="5,442.6 21,442.6 39.5,437.3 55,437 79,432.8 116,419.6 132,421.7 147.6,427.5 160.8,442 179,444.7 197.7,446 216,438.6 245,434 263.6,440.7 279,442.6 297.8,442 329.5,434 361,420 390,412.5 419,421 440,433.3 453,437.3 469,438 486,429.4 508.7,430.7 522,434 532.4,442.6 561.4,444 603.6,440.7 614,438 630,442.6 659,442.8 677.4,436.8 700,428.9 711,427 724,430.7 750.6,429.6 774,423 790,424 806,430.2 819,428.9 840,431.5 856,430.7 866.6,434.7 895.6,433.6 916.7,423 945.7,424 966.7,435 980,437.6 1011.6,444 1044.5,439.4" fill="none" stroke="#20b2aa" stroke-width="1" shape-rendering="optimizeSpeed"/>
<polyline points="5,444 26,442.6 66,435.4 124,421.7 150,423.6 171,435 197.7,444.7 250.4,436 290,442 329.5,438.6 360,427.5 390,415.7 419,417 464,434 490,434.7 514,431 540,438 566.7,444 603.6,442.6 659,443.3 700,435.4 711,431 758.5,430.2 790,424.9 821.8,428.9 856,430.2 874.5,434.7 900.9,434.7 940.4,424.9 953.6,424.9 985,435 1011.6,442 1044.5,441.2" fill="none" stroke="#ff0000" stroke-width="1" shape-rendering="optimizeSpeed"/>
<text x="9" y="401" fill="#ffffff" font-size="11" font-weight="normal" text-anchor="start" textLength="118" lengthAdjust="spacingAndGlyphs" shape-rendering="optimizeSpeed">Sto(11,3,3) 15.0812 10.5272</text></g>
<g clip-path="url(#c3)"><polyline points="5,489.5 26.4,490 39.5,494.3 66,497.4 84.3,502.7 101.5,506.7 117.3,498.8 134.4,469.8 147.6,461.9 166,455.8 197.7,465.8 213.5,481.1 245,485.6 261,482.2 279.4,485.6 290,490.9 311,490.9 340,498.8 357,500 374.3,495.3 388.8,497.4 403,481.6 419,469.8 453.3,461.9 469,467.1 486.3,483.5 503.4,474.2 516.6,472.4 564,481.1 577.2,488.2 630,490.9 656.3,494.8 677.4,501.4 708.5,498.8 724.3,490 740,496.1 757.2,497.4 774.3,487.7 804.6,473.7 819,475.6 837.6,471.1 853.4,475.6 869.2,470.3 887.7,475.6 900.9,486.9 916.7,492.7 933.8,481.6 949.6,484.3 964,470.6 981.2,465.3 1011.6,469.8 1044.5,485.6" fill="none" stroke="#008000" stroke-width="1" shape-rendering="optimizeSpeed"/>
<polyline points="5,492.2 26.4,492.7 66,489.5 84.3,484.3 117.3,469.2 131.8,468 147.6,470.6 197.7,485 224,486.9 247.8,487.7 290,490.9 326.8,489.5 340,486.9 390,472.4 408.5,469.8 421.7,470.6 453.3,477.1 469,480.3 485,479.8 511.3,483 540.3,487.7 556,490.9 603.6,493.5 630,496.1 656.3,494.8 690,490.9 705.8,488.2 724.3,486.9 769,476.4 795.4,475 816.5,476.4 835,478.2 858.7,479 885,483.7 916.7,477.1 951,473.2 969.4,475 1027.4,487.7" fill="none" stroke="#0000ff" stroke-width="1" shape-rendering="optimizeSpeed"/>
<polyline points="5,493.5 21,495.3 52.7,488.2 68.5,484.3 84,476.4 100,463.2 117,454.7 129,460.5 139.7,468.4 153,476.4 168.7,485.6 197.7,493.5 210.9,489.5 247.8,489.5 263.6,492.7 276.7,493.5 290,490.9 326.8,488.2 340,481.6 358.5,475 374.3,469.8 390,460.5 406,465.3 421.7,473.2 437.5,477.1 453.3,484.3 469,487.7 485,477.1 498,483 514,487.7 537.7,492.2 564,497.4 585,493.5 603.6,495.3 630,497.4 648.4,496.1 669.5,490.9 690,485 705.8,482.4 724.3,485 757.2,469.8 790,473.7 803.3,476.4 816.5,476.4 837.6,481.1 853.4,480.3 871.9,487.4 885,486.9 918,469.2 933.8,474.2 949.6,468.4 982.6,485.6 1012.9,493.5 1030,493 1044.5,490.9" fill="none" stroke="#ff0000" stroke-width="1" shape-rendering="optimizeSpeed"/>
<rect x="5" y="488" width="1316" height="2" fill="#ffff00" />
<rect x="5" y="503" width="1316" height="2" fill="#ffff00" />
<text x="9" y="463" fill="#ffffff" font-size="11" font-weight="normal" text-anchor="start" textLength="125" lengthAdjust="spacingAndGlyphs" shape-rendering="optimizeSpeed">KDJ 18.9199 20.7268 24.3407</text></g>
<g clip-path="url(#c4)"><path d="M5,527.5 H1045" stroke="#00b000" stroke-dasharray="3,3"/>
<path d="M5,539.5 H1045" stroke="#e00000" stroke-dasharray="3,3"/>
<path d="M5,552.5 H1045" stroke="#00b000" stroke-dasharray="3,3"/>
<path d="M5,565.5 H1045" stroke="#e00000" stroke-dasharray="3,3"/>
<polyline points="5,551.5 21,558.7 50,551.5 69.8,550.7 84.3,543.6 116,546.3 133,560.8 160.8,566.6 197.7,568.1 213.5,548.1 229.3,556 247.8,552.9 263.6,559.4 295.2,565.5 309.7,567.4 340,550.2 356.7,544 387.5,537.8 403.9,554.2 434.6,557.5 467.4,565.7 485.8,542.7 502.3,556.3 533,556.3 560,558.3 580.5,565.5 595,567 611,568 631.8,574.5 646,567 662.5,565.7 678.9,552.2 695.3,549.3 709.7,552.2 726,565.7 740.4,548 756.8,545.2 773.2,553.4 789.6,556.3 806,564.5 822.4,553.4 838.8,562.4 853.2,553.4 869.6,560.4 888,553.4 902.4,545.2 916.7,544 933,555.4 947.5,547.2 966,565.7 980.3,565.7 1015,572.7 1027.4,565.7 1043.8,564.5" fill="none" stroke="#3c5a5a" stroke-width="1" shape-rendering="optimizeSpeed"/>
<polyline points="611,567.5 631,575" stroke="#1a5a1a" stroke-width="6" stroke-linecap="round" shape-rendering="optimizeSpeed"/>
<polyline points="611,567.5 631,575" stroke="#40e040" stroke-width="4.5" stroke-linecap="round" shape-rendering="optimizeSpeed"/>
<polyline points="611,567.5 631,575" stroke="#3c5a5a" stroke-width="1" stroke-dasharray="2,2" shape-rendering="optimizeSpeed"/>
<polyline points="981,567 1014,573.5" stroke="#1a5a1a" stroke-width="6" stroke-linecap="round" shape-rendering="optimizeSpeed"/>
<polyline points="981,567 1014,573.5" stroke="#40e040" stroke-width="4.5" stroke-linecap="round" shape-rendering="optimizeSpeed"/>
<polyline points="981,567 1014,573.5" stroke="#3c5a5a" stroke-width="1" stroke-dasharray="2,2" shape-rendering="optimizeSpeed"/>
<text x="18" y="525" fill="#ffffff" font-size="11" font-weight="normal" text-anchor="start" textLength="307" lengthAdjust="spacingAndGlyphs" shape-rendering="optimizeSpeed">THV RSI_v2   (M5,  5,  Close,  85,  15 79.0000 60.0000 40.0000 21.0000</text></g>
<g clip-path="url(#c5)"><path d="M6,588.5 H1321" stroke="#808080" stroke-dasharray="3,3"/>
<path d="M6,591.5 H1321" stroke="#808080" stroke-dasharray="3,3"/>
<path d="M6,595.5 H1321" stroke="#808080" stroke-dasharray="3,3"/>
<path d="M6,599.5 H1321" stroke="#808080" stroke-dasharray="3,3"/>
<path d="M6,620.5 H1321" stroke="#808080" stroke-dasharray="3,3"/>
<path d="M6,627.5 H1321" stroke="#808080" stroke-dasharray="3,3"/>
<path d="M6,631.5 H1321" stroke="#808080" stroke-dasharray="3,3"/>
<rect x="5" y="596" width="1316" height="1" fill="#ff0000" />
<rect x="5" y="624" width="1316" height="1" fill="#00ff00" />
<rect x="21" y="605" width="1" height="11" fill="#ff0000"/>
<rect x="19" y="605" width="4" height="11" fill="#ff0000"/>
<rect x="37" y="609" width="1" height="9" fill="#00ff00"/>
<rect x="35" y="609" width="4" height="6" fill="#00ff00"/>
<rect x="53" y="603" width="1" height="10" fill="#00ff00"/>
<rect x="51" y="606" width="4" height="7" fill="#00ff00"/>
<rect x="69" y="603" width="1" height="9" fill="#ff0000"/>
<rect x="67" y="606" width="4" height="5" fill="#ff0000"/>
<rect x="85" y="602" width="1" height="9" fill="#00ff00"/>
<rect x="83" y="602" width="4" height="9" fill="#00ff00"/>
<rect x="101" y="601" width="1" height="10" fill="#ff0000"/>
<rect x="99" y="601" width="4" height="5" fill="#ff0000"/>
<rect x="117" y="606" width="1" height="4" fill="#ff0000"/>
<rect x="115" y="606" width="4" height="4" fill="#ff0000"/>
<rect x="133" y="606" width="1" height="18" fill="#ff0000"/>
<rect x="131" y="606" width="4" height="18" fill="#ff0000"/>
<rect x="149" y="615" width="1" height="12" fill="#ff0000"/>
<rect x="147" y="617" width="4" height="7" fill="#ff0000"/>
<rect x="165" y="616" width="1" height="12" fill="#ff0000"/>
<rect x="163" y="616" width="4" height="12" fill="#ff0000"/>
<rect x="181" y="617" width="1" height="10" fill="#ff0000"/>
<rect x="179" y="620" width="4" height="5" fill="#ff0000"/>
<rect x="197" y="613" width="1" height="9" fill="#ff0000"/>
<rect x="195" y="615" width="4" height="7" fill="#ff0000"/>
<rect x="213" y="604" width="1" height="15" fill="#00ff00"/>
<rect x="211" y="604" width="4" height="15" fill="#00ff00"/>
<rect x="229" y="602" width="1" height="16" fill="#ff0000"/>
<rect x="227" y="602" width="4" height="11" fill="#ff0000"/>
<rect x="245" y="603" width="1" height="10" fill="#00ff00"/>
<rect x="243" y="609" width="4" height="4" fill="#00ff00"/>
<rect x="261" y="608" width="1" height="10" fill="#ff0000"/>
<rect x="259" y="608" width="4" height="10" fill="#ff0000"/>
<rect x="277" y="613" width="1" height="7" fill="#ff0000"/>
<rect x="275" y="613" width="4" height="7" fill="#ff0000"/>
<rect x="293" y="613" width="1" height="13" fill="#ff0000"/>
<rect x="291" y="613" width="4" height="7" fill="#ff0000"/>
<rect x="309" y="610" width="1" height="13" fill="#ff0000"/>
<rect x="307" y="615" width="4" height="6" fill="#ff0000"/>
<rect x="325" y="611" width="1" height="10" fill="#00ff00"/>
<rect x="323" y="611" width="4" height="7" fill="#00ff00"/>
<rect x="341" y="601" width="1" height="12" fill="#00ff00"/>
<rect x="339" y="604" width="4" height="9" fill="#00ff00"/>
<rect x="357" y="602" width="1" height="7" fill="#00ff00"/>
<rect x="355" y="602" width="4" height="7" fill="#00ff00"/>
<rect x="373" y="601" width="1" height="10" fill="#ff0000"/>
<rect x="371" y="602" width="4" height="7" fill="#ff0000"/>
<rect x="389" y="600" width="1" height="11" fill="#00ff00"/>
<rect x="387" y="600" width="4" height="11" fill="#00ff00"/>
<rect x="405" y="603" width="1" height="15" fill="#ff0000"/>
<rect x="403" y="603" width="4" height="15" fill="#ff0000"/>
<rect x="421" y="613" width="1" height="6" fill="#ff0000"/>
<rect x="419" y="613" width="4" height="6" fill="#ff0000"/>
<rect x="437" y="609" width="1" height="10" fill="#00ff00"/>
<rect x="435" y="614" width="4" height="5" fill="#00ff00"/>
<rect x="453" y="612" width="1" height="7" fill="#ff0000"/>
<rect x="451" y="612" width="4" height="7" fill="#ff0000"/>
<rect x="469" y="611" width="1" height="12" fill="#ff0000"/>
<rect x="467" y="611" width="4" height="10" fill="#ff0000"/>
<rect x="485" y="602" width="1" height="18" fill="#00ff00"/>
<rect x="483" y="602" width="4" height="16" fill="#00ff00"/>
<rect x="501" y="603" width="1" height="15" fill="#ff0000"/>
<rect x="499" y="603" width="4" height="15" fill="#ff0000"/>
<rect x="517" y="613" width="1" height="5" fill="#ff0000"/>
<rect x="515" y="613" width="4" height="5" fill="#ff0000"/>
<rect x="533" y="609" width="1" height="8" fill="#00ff00"/>
<rect x="531" y="612" width="4" height="5" fill="#00ff00"/>
<rect x="549" y="609" width="1" height="8" fill="#ff0000"/>
<rect x="547" y="612" width="4" height="5" fill="#ff0000"/>
<rect x="565" y="609" width="1" height="9" fill="#ff0000"/>
<rect x="563" y="612" width="4" height="6" fill="#ff0000"/>
<rect x="581" y="604" width="1" height="23" fill="#ff0000"/>
<rect x="579" y="610" width="4" height="10" fill="#ff0000"/>
<rect x="597" y="611" width="1" height="12" fill="#ff0000"/>
<rect x="595" y="614" width="4" height="9" fill="#ff0000"/>
<rect x="613" y="612" width="1" height="12" fill="#ff0000"/>
<rect x="611" y="615" width="4" height="6" fill="#ff0000"/>
<rect x="629" y="609" width="1" height="15" fill="#ff0000"/>
<rect x="627" y="612" width="4" height="12" fill="#ff0000"/>
<rect x="645" y="615" width="1" height="4" fill="#00ff00"/>
<rect x="643" y="615" width="4" height="4" fill="#00ff00"/>
<rect x="661" y="611" width="1" height="9" fill="#00ff00"/>
<rect x="659" y="613" width="4" height="5" fill="#00ff00"/>
<rect x="677" y="604" width="1" height="10" fill="#00ff00"/>
<rect x="675" y="607" width="4" height="7" fill="#00ff00"/>
<rect x="693" y="603" width="1" height="12" fill="#00ff00"/>
<rect x="691" y="605" width="4" height="5" fill="#00ff00"/>
<rect x="709" y="604" width="1" height="5" fill="#ff0000"/>
<rect x="707" y="604" width="4" height="5" fill="#ff0000"/>
<rect x="725" y="606" width="1" height="15" fill="#ff0000"/>
<rect x="723" y="606" width="4" height="13" fill="#ff0000"/>
<rect x="741" y="604" width="1" height="15" fill="#00ff00"/>
<rect x="739" y="608" width="4" height="11" fill="#00ff00"/>
<rect x="757" y="604" width="1" height="8" fill="#00ff00"/>
<rect x="755" y="607" width="4" height="5" fill="#00ff00"/>
<rect x="773" y="606" width="1" height="10" fill="#ff0000"/>
<rect x="771" y="606" width="4" height="10" fill="#ff0000"/>
<rect x="789" y="610" width="1" height="9" fill="#ff0000"/>
<rect x="787" y="610" width="4" height="5" fill="#ff0000"/>
<rect x="805" y="610" width="1" height="13" fill="#ff0000"/>
<rect x="803" y="610" width="4" height="11" fill="#ff0000"/>
<rect x="821" y="611" width="1" height="9" fill="#00ff00"/>
<rect x="819" y="611" width="4" height="9" fill="#00ff00"/>
<rect x="837" y="607" width="1" height="14" fill="#ff0000"/>
<rect x="835" y="607" width="4" height="12" fill="#ff0000"/>
<rect x="853" y="609" width="1" height="8" fill="#00ff00"/>
<rect x="851" y="609" width="4" height="8" fill="#00ff00"/>
<rect x="869" y="605" width="1" height="13" fill="#ff0000"/>
<rect x="867" y="608" width="4" height="10" fill="#ff0000"/>
<rect x="885" y="610" width="1" height="7" fill="#00ff00"/>
<rect x="883" y="610" width="4" height="7" fill="#00ff00"/>
<rect x="901" y="604" width="1" height="9" fill="#00ff00"/>
<rect x="899" y="604" width="4" height="9" fill="#00ff00"/>
<rect x="917" y="602" width="1" height="7" fill="#00ff00"/>
<rect x="915" y="604" width="4" height="5" fill="#00ff00"/>
<rect x="933" y="605" width="1" height="12" fill="#ff0000"/>
<rect x="931" y="605" width="4" height="12" fill="#ff0000"/>
<rect x="949" y="607" width="1" height="12" fill="#00ff00"/>
<rect x="947" y="607" width="4" height="9" fill="#00ff00"/>
<rect x="965" y="606" width="1" height="23" fill="#ff0000"/>
<rect x="963" y="606" width="4" height="23" fill="#ff0000"/>
<rect x="981" y="615" width="1" height="11" fill="#ff0000"/>
<rect x="979" y="620" width="4" height="6" fill="#ff0000"/>
<rect x="997" y="616" width="1" height="10" fill="#ff0000"/>
<rect x="995" y="616" width="4" height="10" fill="#ff0000"/>
<rect x="1013" y="617" width="1" height="9" fill="#ff0000"/>
<rect x="1011" y="617" width="4" height="9" fill="#ff0000"/>
<rect x="1029" y="615" width="1" height="6" fill="#00ff00"/>
<rect x="1027" y="615" width="4" height="6" fill="#00ff00"/>
<rect x="1045" y="607" width="1" height="9" fill="#00ff00"/>
<rect x="1043" y="607" width="4" height="9" fill="#00ff00"/>
<text x="9" y="594" fill="#ffffff" font-size="11" font-weight="normal" text-anchor="start" textLength="230" lengthAdjust="spacingAndGlyphs" shape-rendering="optimizeSpeed">CHT_Value_Chart (5,0) 0.6652 -3.5730 -2.1781 0.6116</text>
<path d="M5,632 L10,637 H5 Z" fill="#708090"/></g>
<rect x="4.5" y="100.5" width="1317" height="233" fill="none" stroke="#fff"/>
<rect x="4.5" y="335.5" width="1317" height="51" fill="none" stroke="#fff"/>
<rect x="4.5" y="388.5" width="1317" height="60" fill="none" stroke="#fff"/>
<rect x="4.5" y="450.5" width="1317" height="60" fill="none" stroke="#fff"/>
<rect x="4.5" y="512.5" width="1317" height="67" fill="none" stroke="#fff"/>
<rect x="4.5" y="581.5" width="1317" height="56" fill="none" stroke="#fff"/>
<rect x="1323" y="101" width="41" height="11" fill="#ff00ff"/>
<rect x="1321" y="107" width="2" height="1" fill="#fff"/>
<text x="1327" y="110.5" fill="#000000" font-size="11" font-weight="normal" text-anchor="start" textLength="32" lengthAdjust="spacingAndGlyphs" shape-rendering="optimizeSpeed">1.25580</text>
<rect x="1323" y="123" width="41" height="11" fill="#ffc0cb"/>
<rect x="1321" y="129" width="2" height="1" fill="#fff"/>
<text x="1327" y="132.5" fill="#000000" font-size="11" font-weight="normal" text-anchor="start" textLength="32" lengthAdjust="spacingAndGlyphs" shape-rendering="optimizeSpeed">1.25504</text>
<rect x="1323" y="145" width="41" height="11" fill="#0000ff"/>
<rect x="1321" y="151" width="2" height="1" fill="#fff"/>
<text x="1327" y="154.5" fill="#000000" font-size="11" font-weight="normal" text-anchor="start" textLength="32" lengthAdjust="spacingAndGlyphs" shape-rendering="optimizeSpeed">1.25427</text>
<rect x="1323" y="167" width="41" height="11" fill="#ffa500"/>
<rect x="1321" y="173" width="2" height="1" fill="#fff"/>
<text x="1327" y="176.5" fill="#000000" font-size="11" font-weight="normal" text-anchor="start" textLength="32" lengthAdjust="spacingAndGlyphs" shape-rendering="optimizeSpeed">1.25351</text>
<rect x="1323" y="189" width="41" height="11" fill="#ff0000"/>
<rect x="1321" y="195" width="2" height="1" fill="#fff"/>
<text x="1327" y="198.5" fill="#000000" font-size="11" font-weight="normal" text-anchor="start" textLength="32" lengthAdjust="spacingAndGlyphs" shape-rendering="optimizeSpeed">1.25275</text>
<rect x="1323" y="211" width="41" height="11" fill="#6b8e23"/>
<rect x="1321" y="217" width="2" height="1" fill="#fff"/>
<text x="1327" y="220.5" fill="#000000" font-size="11" font-weight="normal" text-anchor="start" textLength="32" lengthAdjust="spacingAndGlyphs" shape-rendering="optimizeSpeed">1.25198</text>
<rect x="1323" y="234" width="41" height="11" fill="#0000ff"/>
<rect x="1321" y="240" width="2" height="1" fill="#fff"/>
<text x="1327" y="243.5" fill="#000000" font-size="11" font-weight="normal" text-anchor="start" textLength="32" lengthAdjust="spacingAndGlyphs" shape-rendering="optimizeSpeed">1.25122</text>
<rect x="1323" y="256" width="41" height="11" fill="#6b8e23"/>
<rect x="1321" y="262" width="2" height="1" fill="#fff"/>
<text x="1327" y="265.5" fill="#000000" font-size="11" font-weight="normal" text-anchor="start" textLength="32" lengthAdjust="spacingAndGlyphs" shape-rendering="optimizeSpeed">1.25046</text>
<rect x="1323" y="278" width="41" height="11" fill="#ff0000"/>
<rect x="1321" y="284" width="2" height="1" fill="#fff"/>
<text x="1327" y="287.5" fill="#000000" font-size="11" font-weight="normal" text-anchor="start" textLength="32" lengthAdjust="spacingAndGlyphs" shape-rendering="optimizeSpeed">1.24969</text>
<rect x="1323" y="300" width="41" height="11" fill="#ffa500"/>
<rect x="1321" y="306" width="2" height="1" fill="#fff"/>
<text x="1327" y="309.5" fill="#000000" font-size="11" font-weight="normal" text-anchor="start" textLength="32" lengthAdjust="spacingAndGlyphs" shape-rendering="optimizeSpeed">1.24893</text>
<rect x="1323" y="322" width="41" height="11" fill="#0000ff"/>
<rect x="1321" y="328" width="2" height="1" fill="#fff"/>
<text x="1327" y="331.5" fill="#000000" font-size="11" font-weight="normal" text-anchor="start" textLength="32" lengthAdjust="spacingAndGlyphs" shape-rendering="optimizeSpeed">1.24817</text>
<rect x="1323" y="289" width="41" height="9" fill="#ffffff"/>
<text x="1327" y="297" fill="#000000" font-size="11" font-weight="normal" text-anchor="start" textLength="32" lengthAdjust="spacingAndGlyphs" shape-rendering="optimizeSpeed">1.24937</text>
<rect x="1321" y="164" width="2" height="1" fill="#fff"/>
<text x="1327" y="167.0" fill="#ffffff" font-size="11" font-weight="normal" text-anchor="start" textLength="32" lengthAdjust="spacingAndGlyphs" shape-rendering="optimizeSpeed">1.25385</text>
<rect x="1321" y="230" width="2" height="1" fill="#fff"/>
<text x="1327" y="234.5" fill="#ffffff" font-size="11" font-weight="normal" text-anchor="start" textLength="32" lengthAdjust="spacingAndGlyphs" shape-rendering="optimizeSpeed">1.25155</text>
<rect x="1321" y="338" width="2" height="1" fill="#fff"/>
<text x="1325" y="346" fill="#ffffff" font-size="11" font-weight="normal" text-anchor="start" textLength="27" lengthAdjust="spacingAndGlyphs" shape-rendering="optimizeSpeed">1.2581</text>
<rect x="1321" y="376" width="2" height="1" fill="#fff"/>
<text x="1325" y="384" fill="#ffffff" font-size="11" font-weight="normal" text-anchor="start" textLength="27" lengthAdjust="spacingAndGlyphs" shape-rendering="optimizeSpeed">1.2474</text>
<text x="1325" y="400" fill="#ffffff" font-size="11" font-weight="normal" text-anchor="start" textLength="16" lengthAdjust="spacingAndGlyphs" shape-rendering="optimizeSpeed">100</text>
<rect x="1323" y="396" width="12" height="10" fill="#ff0000"/>
<text x="1324" y="404.5" fill="#000000" font-size="11" font-weight="normal" text-anchor="start" textLength="11" lengthAdjust="spacingAndGlyphs" shape-rendering="optimizeSpeed">80</text>
<rect x="1323" y="431" width="12" height="11" fill="#ff0000"/>
<text x="1324" y="440" fill="#000000" font-size="11" font-weight="normal" text-anchor="start" textLength="11" lengthAdjust="spacingAndGlyphs" shape-rendering="optimizeSpeed">20</text>
<text x="1325" y="446" fill="#ffffff" font-size="11" font-weight="normal" text-anchor="start" textLength="6" lengthAdjust="spacingAndGlyphs" shape-rendering="optimizeSpeed">0</text>
<text x="1325" y="461.5" fill="#ffffff" font-size="11" font-weight="normal" text-anchor="start" textLength="35" lengthAdjust="spacingAndGlyphs" shape-rendering="optimizeSpeed">69.4696</text>
<rect x="1323" y="484" width="12" height="11" fill="#ffff00"/>
<text x="1324" y="493" fill="#000000" font-size="11" font-weight="normal" text-anchor="start" textLength="11" lengthAdjust="spacingAndGlyphs" shape-rendering="optimizeSpeed">20</text>
<rect x="1323" y="499" width="6" height="11" fill="#ffff00"/>
<text x="1324" y="507.5" fill="#ffffff" font-size="11" font-weight="normal" text-anchor="start" textLength="32" lengthAdjust="spacingAndGlyphs" shape-rendering="optimizeSpeed">0.5861</text>
<text x="1325" y="523" fill="#ffffff" font-size="11" font-weight="normal" text-anchor="start" textLength="16" lengthAdjust="spacingAndGlyphs" shape-rendering="optimizeSpeed">100</text>
<text x="1325" y="576" fill="#ffffff" font-size="11" font-weight="normal" text-anchor="start" textLength="6" lengthAdjust="spacingAndGlyphs" shape-rendering="optimizeSpeed">0</text>
<text x="1325" y="592" fill="#ffffff" font-size="11" font-weight="normal" text-anchor="start" textLength="10" lengthAdjust="spacingAndGlyphs" shape-rendering="optimizeSpeed">15</text>
<rect x="1323" y="590" width="36" height="11" fill="#ff0000"/>
<text x="1327" y="599.5" fill="#000000" font-size="11" font-weight="normal" text-anchor="start" textLength="30" lengthAdjust="spacingAndGlyphs" shape-rendering="optimizeSpeed">7.4000</text>
<text x="1325" y="612" fill="#ffffff" font-size="11" font-weight="normal" text-anchor="start" textLength="20" lengthAdjust="spacingAndGlyphs" shape-rendering="optimizeSpeed">0.00</text>
<rect x="1323" y="618" width="39" height="11" fill="#00ff00"/>
<text x="1326" y="627.5" fill="#000000" font-size="11" font-weight="normal" text-anchor="start" textLength="33" lengthAdjust="spacingAndGlyphs" shape-rendering="optimizeSpeed">-8.0000</text>
<text x="1325" y="634" fill="#ffffff" font-size="11" font-weight="normal" text-anchor="start" textLength="14" lengthAdjust="spacingAndGlyphs" shape-rendering="optimizeSpeed">-15</text>
<rect x="5" y="637" width="1" height="4" fill="#fff"/>
<text x="4.7" y="650" fill="#ffffff" font-size="10.2" font-weight="normal" text-anchor="start" textLength="53" lengthAdjust="spacingAndGlyphs" shape-rendering="optimizeSpeed">17 Nov 2014</text>
<rect x="69" y="637" width="1" height="4" fill="#fff"/>
<text x="68.5" y="650" fill="#ffffff" font-size="10.2" font-weight="normal" text-anchor="start" textLength="57" lengthAdjust="spacingAndGlyphs" shape-rendering="optimizeSpeed">17 Nov 06:20</text>
<rect x="133" y="637" width="1" height="4" fill="#fff"/>
<text x="132.5" y="650" fill="#ffffff" font-size="10.2" font-weight="normal" text-anchor="start" textLength="57" lengthAdjust="spacingAndGlyphs" shape-rendering="optimizeSpeed">17 Nov 06:40</text>
<rect x="197" y="637" width="1" height="4" fill="#fff"/>
<text x="196.5" y="650" fill="#ffffff" font-size="10.2" font-weight="normal" text-anchor="start" textLength="57" lengthAdjust="spacingAndGlyphs" shape-rendering="optimizeSpeed">17 Nov 07:00</text>
<rect x="261" y="637" width="1" height="4" fill="#fff"/>
<text x="260.5" y="650" fill="#ffffff" font-size="10.2" font-weight="normal" text-anchor="start" textLength="57" lengthAdjust="spacingAndGlyphs" shape-rendering="optimizeSpeed">17 Nov 07:20</text>
<rect x="325" y="637" width="1" height="4" fill="#fff"/>
<text x="324.5" y="650" fill="#ffffff" font-size="10.2" font-weight="normal" text-anchor="start" textLength="57" lengthAdjust="spacingAndGlyphs" shape-rendering="optimizeSpeed">17 Nov 07:40</text>
<rect x="389" y="637" width="1" height="4" fill="#fff"/>
<text x="388.5" y="650" fill="#ffffff" font-size="10.2" font-weight="normal" text-anchor="start" textLength="57" lengthAdjust="spacingAndGlyphs" shape-rendering="optimizeSpeed">17 Nov 08:00</text>
<rect x="453" y="637" width="1" height="4" fill="#fff"/>
<text x="452.5" y="650" fill="#ffffff" font-size="10.2" font-weight="normal" text-anchor="start" textLength="57" lengthAdjust="spacingAndGlyphs" shape-rendering="optimizeSpeed">17 Nov 08:20</text>
<rect x="517" y="637" width="1" height="4" fill="#fff"/>
<text x="516.5" y="650" fill="#ffffff" font-size="10.2" font-weight="normal" text-anchor="start" textLength="57" lengthAdjust="spacingAndGlyphs" shape-rendering="optimizeSpeed">17 Nov 08:40</text>
<rect x="581" y="637" width="1" height="4" fill="#fff"/>
<text x="580.5" y="650" fill="#ffffff" font-size="10.2" font-weight="normal" text-anchor="start" textLength="57" lengthAdjust="spacingAndGlyphs" shape-rendering="optimizeSpeed">17 Nov 09:00</text>
<rect x="645" y="637" width="1" height="4" fill="#fff"/>
<text x="644.5" y="650" fill="#ffffff" font-size="10.2" font-weight="normal" text-anchor="start" textLength="57" lengthAdjust="spacingAndGlyphs" shape-rendering="optimizeSpeed">17 Nov 09:20</text>
<rect x="709" y="637" width="1" height="4" fill="#fff"/>
<text x="708.5" y="650" fill="#ffffff" font-size="10.2" font-weight="normal" text-anchor="start" textLength="57" lengthAdjust="spacingAndGlyphs" shape-rendering="optimizeSpeed">17 Nov 09:40</text>
<rect x="773" y="637" width="1" height="4" fill="#fff"/>
<text x="772.5" y="650" fill="#ffffff" font-size="10.2" font-weight="normal" text-anchor="start" textLength="57" lengthAdjust="spacingAndGlyphs" shape-rendering="optimizeSpeed">17 Nov 10:00</text>
<rect x="837" y="637" width="1" height="4" fill="#fff"/>
<text x="836.5" y="650" fill="#ffffff" font-size="10.2" font-weight="normal" text-anchor="start" textLength="57" lengthAdjust="spacingAndGlyphs" shape-rendering="optimizeSpeed">17 Nov 10:20</text>
<rect x="901" y="637" width="1" height="4" fill="#fff"/>
<text x="900.5" y="650" fill="#ffffff" font-size="10.2" font-weight="normal" text-anchor="start" textLength="57" lengthAdjust="spacingAndGlyphs" shape-rendering="optimizeSpeed">17 Nov 10:40</text>
<rect x="965" y="637" width="1" height="4" fill="#fff"/>
<text x="964.5" y="650" fill="#ffffff" font-size="10.2" font-weight="normal" text-anchor="start" textLength="57" lengthAdjust="spacingAndGlyphs" shape-rendering="optimizeSpeed">17 Nov 11:00</text>
<rect x="1029" y="637" width="1" height="4" fill="#fff"/>
<text x="1028.5" y="650" fill="#ffffff" font-size="10.2" font-weight="normal" text-anchor="start" textLength="57" lengthAdjust="spacingAndGlyphs" shape-rendering="optimizeSpeed">17 Nov 11:20</text>
</svg>
<div class="a" style="left:0;top:658px;width:1366px;height:20px;background:#f0f0f0"></div>
<div class="a" style="left:0;top:658px;width:2px;height:19px;background:#a0a0a0"></div>
<div class="a" style="left:4px;top:656px;width:80px;height:21px;background:#fff;border-left:1px solid #000;border-right:2px solid #000;border-bottom:2px solid #000"></div>
<div class="t" style="left:14px;top:662px;font-size:10.1px;color:#000">EURUSD,M5</div>
<div class="t" style="left:94.5px;top:662px;font-size:9.9px;color:#6a6a80">GBPUSD,M5</div>
<div class="a" style="left:164px;top:660px;width:1px;height:13px;background:#707070"></div>
<div class="t" style="left:173px;top:662px;font-size:9.9px;color:#6a6a80">USDJPY,M5</div>
<div class="a" style="left:240px;top:660px;width:1px;height:13px;background:#707070"></div>
<div class="t" style="left:250px;top:662px;font-size:9.9px;color:#6a6a80">USDCHF,M5</div>
<div class="a" style="left:320px;top:660px;width:1px;height:13px;background:#707070"></div>
<div class="t" style="left:329.5px;top:662px;font-size:9.9px;color:#6a6a80">AUDUSD,M5</div>
<div class="a" style="left:400px;top:660px;width:1px;height:13px;background:#707070"></div>
<div class="t" style="left:411px;top:662px;font-size:9.9px;color:#6a6a80">_SP500,M5</div>
<div class="a" style="left:476px;top:660px;width:1px;height:13px;background:#707070"></div>
<div class="t" style="left:486px;top:662px;font-size:9.9px;color:#6a6a80">XAUUSD,M5</div>
<div class="a" style="left:556px;top:660px;width:1px;height:13px;background:#707070"></div>
<svg style="left:1334px;top:661px" width="28" height="12" viewBox="0 0 28 12">
<path d="M8,2 v8 l-4,-4 z" fill="#808080"/><path d="M21,2 v8 l4,-4 z" fill="#808080"/>
</svg>
<div class="a" style="left:0;top:677px;width:1366px;height:1px;background:#d8d8d8"></div>
<div class="a" style="left:15px;top:681px;width:1349px;height:22px;background:#fff;border:1px solid #a8a8a8;border-right-color:#e0e0e0;border-bottom-color:#e0e0e0"></div>
<svg style="left:3px;top:681px" width="10" height="22" viewBox="0 0 10 22">
<path d="M1.5,1.5 l5,5 M6.5,1.5 l-5,5" stroke="#000" stroke-width="1.6"/>
<rect x="2" y="12" width="5" height="1" fill="#a0a0a0"/><rect x="2" y="14" width="5" height="1" fill="#a0a0a0"/><rect x="2" y="16" width="5" height="1" fill="#a0a0a0"/><rect x="2" y="18" width="5" height="1" fill="#a0a0a0"/>
</svg>
<svg style="left:19px;top:687px" width="12" height="12" viewBox="0 0 12 12"><circle cx="5.5" cy="5.5" r="4" fill="#b8b8b8" stroke="#808080"/></svg>
<div class="t" style="left:36.5px;top:686px;font-size:11.2px;color:#000">Баланс: 4 997.05 USD  Прибыль: 0.00  Средства: 4 997.05  Свободная маржа: 4 997.05</div>
<div class="a" style="left:0;top:706px;width:1366px;height:1px;background:#a0a0a0"></div>
<div class="t" style="left:2px;top:714px;font-size:11.45px;color:#000">Для справки, нажмите F1</div>
<div class="t" style="left:646px;top:714px;font-size:11.45px;color:#000">Default</div>
<div class="a" style="left:640px;top:710px;width:1px;height:17px;background:#a0a0a0"></div>
<div class="a" style="left:756px;top:710px;width:1px;height:17px;background:#a0a0a0"></div>
<div class="a" style="left:858px;top:710px;width:1px;height:17px;background:#a0a0a0"></div>
<div class="a" style="left:929px;top:710px;width:1px;height:17px;background:#a0a0a0"></div>
<div class="a" style="left:1000px;top:710px;width:1px;height:17px;background:#a0a0a0"></div>
<div class="a" style="left:1068px;top:710px;width:1px;height:17px;background:#a0a0a0"></div>
<div class="a" style="left:1138px;top:710px;width:1px;height:17px;background:#a0a0a0"></div>
<div class="a" style="left:1204px;top:710px;width:1px;height:17px;background:#a0a0a0"></div>
<svg style="left:1209px;top:713px" width="26" height="12" viewBox="0 0 26 12"><rect x="1.0" y="0" width="1.6" height="8" fill="#5a7a10"/><rect x="1.0" y="8" width="1.6" height="4" fill="#103060"/><rect x="3.6" y="0" width="1.6" height="8" fill="#5a7a10"/><rect x="3.6" y="8" width="1.6" height="4" fill="#103060"/><rect x="6.2" y="0" width="1.6" height="8" fill="#5a7a10"/><rect x="6.2" y="8" width="1.6" height="4" fill="#103060"/><rect x="8.8" y="0" width="1.6" height="8" fill="#5a7a10"/><rect x="8.8" y="8" width="1.6" height="4" fill="#103060"/><rect x="11.4" y="0" width="1.6" height="8" fill="#5a7a10"/><rect x="11.4" y="8" width="1.6" height="4" fill="#103060"/><rect x="14.0" y="0" width="1.6" height="8" fill="#5a7a10"/><rect x="14.0" y="8" width="1.6" height="4" fill="#103060"/><rect x="16.6" y="0" width="1.6" height="8" fill="#5a7a10"/><rect x="16.6" y="8" width="1.6" height="4" fill="#103060"/><rect x="19.2" y="0" width="1.6" height="8" fill="#5a7a10"/><rect x="19.2" y="8" width="1.6" height="4" fill="#103060"/><rect x="21.8" y="0" width="1.6" height="8" fill="#5a7a10"/><rect x="21.8" y="8" width="1.6" height="4" fill="#103060"/></svg>
<div class="t" style="left:1275px;top:714px;font-size:11.45px;color:#000">2814/1 kb</div>
<div class="a" style="left:0;top:728px;width:1366px;height:40px;background:linear-gradient(90deg,#8ea3b8 0%,#93a9bf 4.4%,#a6c0da 6%,#b3d0ea 7.5%,#b3d0ea 73%,#a5bfd9 75.5%,#8fa7bf 78%,#8ba2ba 100%)"></div>
<div class="a" style="left:0;top:728px;width:1366px;height:1px;background:#3a4650"></div>
<div class="a" style="left:0;top:729px;width:1366px;height:1px;background:#d0dce8;opacity:0.6"></div>
<svg style="left:6px;top:729px" width="44" height="39" viewBox="0 0 44 39">
<defs><linearGradient id="orb" x1="0" y1="0" x2="0" y2="1"><stop offset="0" stop-color="#c8dceb"/><stop offset="0.42" stop-color="#5f8fb8"/><stop offset="0.5" stop-color="#0f477f"/><stop offset="0.85" stop-color="#1570b8"/><stop offset="1" stop-color="#20c8f0"/></linearGradient></defs>
<circle cx="21" cy="19" r="17.5" fill="url(#orb)" stroke="#dfe8f0" stroke-width="1"/>
<circle cx="21" cy="19" r="18.3" fill="none" stroke="#2a4a6a" stroke-width="0.8"/>
<path d="M13,10 q4,-2 8,0.5 l-1,7.5 q-4,-2.5 -8.5,-0.5 z" fill="#f05a28"/>
<path d="M22,11 q4,2 8,-0.5 l-1.3,7.8 q-4,2 -8,0.2 z" fill="#8cc43c"/>
<path d="M11.5,18.5 q4,-2 8,0.5 l-1,7.5 q-4,-2.5 -8.5,-0.5 z" fill="#20a0e8"/>
<path d="M20.5,19.5 q4,2 8,-0.5 l-1.3,7.8 q-4,2 -8,0.2 z" fill="#fcc020"/>
</svg>
<svg style="left:70px;top:733px" width="38" height="33" viewBox="0 0 38 33">
<path d="M3.5,2.5 h12 l1.5,2 h2 v6 h-15.5 z" fill="#f4dc98" stroke="#c8a050"/>
<rect x="5" y="4" width="9" height="3" fill="#fff"/><rect x="5" y="4" width="3" height="2.5" fill="#20b020"/>
<path d="M8.5,4.5 h12 l1.5,2 h2 v6 h-15.5 z" fill="#f4dc98" stroke="#c8a050"/>
<rect x="10" y="6" width="9" height="3" fill="#fff"/><rect x="10" y="6" width="3" height="2.5" fill="#e02020"/>
<path d="M14.5,6.5 h12 l1.5,2 h6 v6 h-19.5 z" fill="#f4dc98" stroke="#c8a050"/>
<rect x="16" y="8" width="10" height="3" fill="#fff"/><rect x="16" y="8" width="3" height="2.5" fill="#20a0f0"/>
<path d="M3.5,10.5 h31 v18 h-31 z" fill="#f8e4a4" stroke="#c8a050"/>
<path d="M7,19 h22 v10 h-6 v-5 h-10 v5 h-6 z" fill="#a8dcf4" stroke="#4aa0d0"/>
</svg>
<div class="a" style="left:121px;top:729px;width:59px;height:39px;border:1px solid #7f98b3;border-radius:3px;background:linear-gradient(#d4e5f5,#b9d2ea);box-shadow:inset 0 0 0 1px rgba(255,255,255,0.5)"></div>
<div class="a" style="left:184px;top:729px;width:59px;height:39px;border:1px solid #7f98b3;border-radius:3px;background:linear-gradient(#d4e5f5,#b9d2ea);box-shadow:inset 0 0 0 1px rgba(255,255,255,0.5)"></div>
<div class="a" style="left:245px;top:729px;width:59px;height:39px;border:1px solid #7f98b3;border-radius:3px;background:linear-gradient(#d4e5f5,#b9d2ea);box-shadow:inset 0 0 0 1px rgba(255,255,255,0.5)"></div>
<svg style="left:136px;top:734px" width="30" height="30" viewBox="0 0 30 30">
<circle cx="15" cy="15" r="14" fill="#db4437"/>
<path d="M15,15 L27.1,8 A14,14 0 0 1 15,29 Z" fill="#f4c20d"/>
<path d="M15,15 L15,29 A14,14 0 0 1 2.9,8 Z" fill="#0f9d58"/>
<path d="M15,15 L2.9,8 A14,14 0 0 1 27.1,8 Z" fill="#db4437"/>
<circle cx="15" cy="15" r="6.5" fill="#fff"/>
<circle cx="15" cy="15" r="5" fill="#4285f4"/>
</svg>
<svg style="left:197px;top:733px" width="34" height="32" viewBox="0 0 34 32">
<path d="M3,4 L22,1 L24,20 L5,23 Z" fill="#1f3fa8" stroke="#c8d0d8" stroke-width="1.5"/>
<path d="M6,7 L20,5 L21,17 L7,19 Z" fill="#3a78e8"/>
<path d="M10,24 h12 l2,4 h-16 z" fill="#c8c8c8"/>
<circle cx="25" cy="23" r="7" fill="#707880" stroke="#fff"/>
<path d="M21,22 l3,-3 M21,22 l3,3 M29,24 l-3,-3 M29,24 l-3,3" stroke="#40d040" stroke-width="1.4"/>
</svg>
<svg style="left:252px;top:732px" width="46" height="34" viewBox="0 0 46 34">
<polyline points="8,8 12,4 15,7 19,3 23,6 27,2 31,6 35,3 38,8" fill="none" stroke="#e03030" stroke-width="1.2"/>
<polyline points="8,11 12,7 15,10 19,6 23,9 27,5 31,9 35,6 38,11" fill="none" stroke="#f08030" stroke-width="1.2"/>
<polyline points="8,14 12,10 15,13 19,9 23,12 27,8 31,12 35,9 38,14" fill="none" stroke="#c0c020" stroke-width="1.2"/>
<polyline points="8,17 12,13 15,16 19,12 23,15 27,11 31,15 35,12 38,17" fill="none" stroke="#40b040" stroke-width="1.2"/>
<text x="23" y="30" font-size="12" fill="#000" text-anchor="middle">alpari</text>
</svg>
<div class="t" style="left:1102px;top:740px;font-size:11.5px;color:#f0f4f8">RU</div>
<svg style="left:1128px;top:738px" width="145" height="22" viewBox="0 0 145 22">
<rect x="3" y="4" width="12" height="12" fill="#f0c040" stroke="#3070c0"/>
<path d="M5,8 l4,-3 l5,5" stroke="#3070c0" fill="none" stroke-width="1.5"/>
<rect x="27" y="4" width="16" height="11" fill="#203050" stroke="#c0c8d0"/>
<path d="M31,12 l3,-5 l4,4" stroke="#60a0ff" fill="none"/>
<rect x="32" y="16" width="6" height="2" fill="#505050"/>
<path d="M52,7 h4 l5,-4 v16 l-5,-4 h-4 z" fill="#e86030" stroke="#903010"/>
<path d="M63,7 q2,4 0,8 M66,5 q3,6 0,12" stroke="#903010" fill="none"/>
<path d="M76,7 h4 l5,-4 v16 l-5,-4 h-4 z" fill="#f0f0f0" stroke="#707070"/>
<path d="M87,7 q2,4 0,8 M90,5 q3,6 0,12" stroke="#f0f0f0" fill="none" stroke-width="1.3"/>
<path d="M101,2 v18" stroke="#fff" stroke-width="1.5"/>
<path d="M102,3 h10 v7 h-10 z" fill="#f0f0f0" stroke="#606060" stroke-width="0.6"/>
<circle cx="111" cy="15" r="4.5" fill="#e02020" stroke="#fff"/>
<path d="M109,13 l4,4 M113,13 l-4,4" stroke="#fff" stroke-width="1.2"/>
<rect x="128" y="5" width="13" height="10" fill="#8898a8" stroke="#f0f0f0"/>
<path d="M124,3 v6 h4 v-6 M126,9 v8 h6" stroke="#f0f0f0" fill="none" stroke-width="1.2"/>
</svg>
<div class="t" style="left:1299px;top:735px;font-size:11.5px;color:#fff">12:29</div>
<div class="t" style="left:1286px;top:752px;font-size:11.5px;color:#fff">17.11.2014</div>
<div class="a" style="left:1352px;top:729px;width:14px;height:39px;background:linear-gradient(90deg,#8aa2bb,#a8bfd6);border-left:1px solid #6a7f96;border-top:1px solid #9ab0c6"></div>
</body></html>
